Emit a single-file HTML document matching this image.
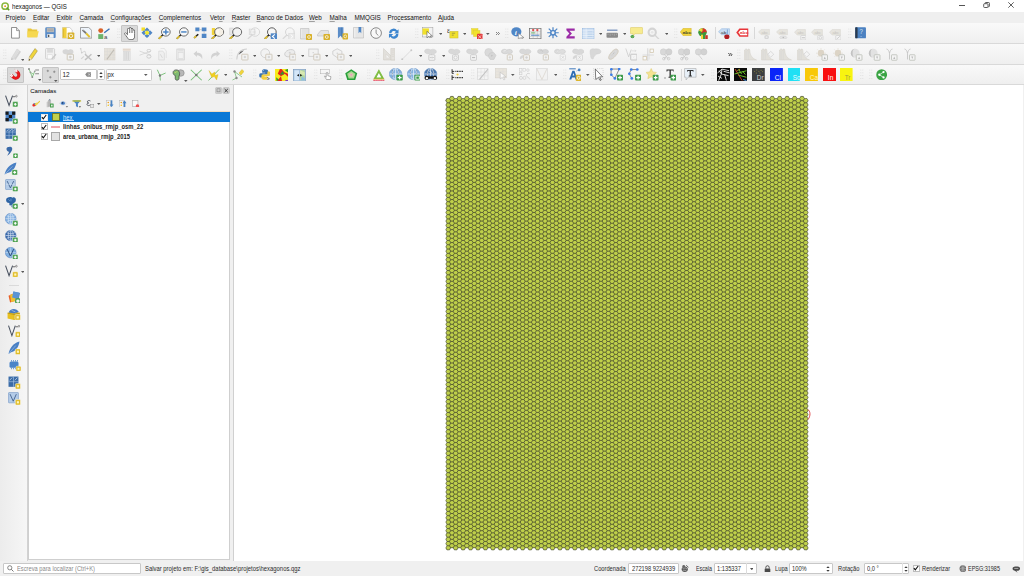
<!DOCTYPE html>
<html><head><meta charset="utf-8">
<style>
*{margin:0;padding:0;box-sizing:border-box}
html,body{width:1024px;height:576px;overflow:hidden;background:#f0f0f0;font-family:"Liberation Sans",sans-serif;color:#000}
.a{position:absolute}
u{text-decoration:underline;text-decoration-thickness:0.45px;text-underline-offset:0.9px;text-decoration-color:#a0a0a0}
#title{left:0;top:0;width:1024px;height:12px;background:#fff}
#menu{left:0;top:12px;width:1024px;height:10.5px;background:#efefef}
.tb{left:0;width:1024px;background:linear-gradient(#f9f9f9,#efefef);border-bottom:1px solid #d9d9d9}
.mi{position:absolute;top:13.6px;font-size:6.3px;line-height:8px;color:#111;white-space:nowrap}
.grip{width:2px;background-image:radial-gradient(circle,#c4c4c4 0.6px,transparent 0.7px);background-size:2px 2px}
.pressed{background:#dadada;border:0.6px solid #c4c4c4;border-radius:1px}
.inp{background:#fff;border:0.6px solid #c8c8c8;border-radius:1px}
#canvas{left:233px;top:85px;width:790px;height:475.5px;background:#fff;border-left:0.7px solid #d0d0d0}
.lt{position:absolute;font-size:7px;line-height:9px;white-space:nowrap;font-weight:bold;color:#1a1a1a;transform:scaleX(0.835);transform-origin:0 0}
.cb{position:absolute;width:7px;height:7px;background:#fff;border:0.6px solid #bdbdbd}
.st{position:absolute;top:565.2px;font-size:6.6px;line-height:7px;white-space:nowrap;color:#2a2a2a;transform:scaleX(0.87);transform-origin:0 0}
</style></head><body>
<div id="title" class="a">
  <svg class="a" style="left:1px;top:2px" width="9" height="9" viewBox="0 0 24 24"><circle cx="11" cy="11" r="8.5" fill="none" stroke="#8cb840" stroke-width="4"/><path d="M15 15L22 22" stroke="#5f9a2a" stroke-width="4"/><circle cx="11" cy="11" r="2.5" fill="#f09020"/></svg>
  <div class="a" style="left:12.2px;top:2.6px;font-size:7px;line-height:8px;color:#111;white-space:nowrap;transform:scaleX(0.875);transform-origin:0 0">hexagonos — QGIS</div>
  <div class="a" style="left:959px;top:5px;width:6px;height:0.9px;background:#555"></div>
  <svg class="a" style="left:982.5px;top:2.3px" width="7" height="6" viewBox="0 0 7 6"><rect x="0.7" y="1.7" width="4.3" height="3.8" rx="0.8" fill="none" stroke="#4a4a4a" stroke-width="0.9"/><path d="M2 1.4V1.2A0.8 0.8 0 0 1 2.8 0.5H5.6A0.8 0.8 0 0 1 6.4 1.3V4A0.8 0.8 0 0 1 5.6 4.8H5.3" fill="none" stroke="#4a4a4a" stroke-width="0.9"/></svg>
  <svg class="a" style="left:1007.8px;top:2.4px" width="6" height="6" viewBox="0 0 6 6"><path d="M0.3 0.3L5.7 5.7M5.7 0.3L0.3 5.7" stroke="#444" stroke-width="0.85"/></svg>
</div>
<div id="menu" class="a"></div>
<div class="mi" style="left:5.5px">Pro<u>j</u>eto</div>
<div class="mi" style="left:33px"><u>E</u>ditar</div>
<div class="mi" style="left:56.5px"><u>E</u>xibir</div>
<div class="mi" style="left:79.5px"><u>C</u>amada</div>
<div class="mi" style="left:110.5px"><u>C</u>onfigurações</div>
<div class="mi" style="left:158.8px"><u>C</u>omplementos</div>
<div class="mi" style="left:210px">Vet<u>o</u>r</div>
<div class="mi" style="left:231.8px"><u>R</u>aster</div>
<div class="mi" style="left:256.5px"><u>B</u>anco de Dados</div>
<div class="mi" style="left:309px"><u>W</u>eb</div>
<div class="mi" style="left:329.5px"><u>M</u>alha</div>
<div class="mi" style="left:354.5px">MMQGIS</div>
<div class="mi" style="left:387.5px">Pro<u>c</u>essamento</div>
<div class="mi" style="left:438px"><u>A</u>juda</div>

<div class="tb a" style="top:22.5px;height:21px"></div>
<div class="tb a" style="top:43.5px;height:21px"></div>
<div class="tb a" style="top:64.5px;height:20px"></div>
<!-- left toolbar -->
<div class="a" style="left:0;top:85px;width:27.5px;height:476px;background:linear-gradient(90deg,#ececec,#f6f6f6);border-right:0.7px solid #d2d2d2"></div>
<div class="a grip" style="left:10px;top:88px;width:10px;height:2px;background-image:radial-gradient(circle,#c8c8c8 0.6px,transparent 0.7px)"></div>
<!-- layers panel -->
<div class="a" style="left:28px;top:85px;width:205px;height:476px;background:#f0f0f0"></div>
<div class="a" style="left:30.2px;top:86.6px;font-size:6.1px;line-height:8px;color:#000">Camadas</div>
<svg class="a" style="left:214.5px;top:86.5px" width="15" height="7.5" viewBox="0 0 15 7.5"><rect x="0.3" y="0.3" width="6.6" height="6.6" rx="1.8" fill="#cfcfcf" stroke="#b8b8b8" stroke-width="0.5"/><rect x="2" y="1.8" width="3" height="3" fill="none" stroke="#888" stroke-width="0.6"/><rect x="7.9" y="0.3" width="6.6" height="6.6" rx="1.8" fill="#cfcfcf" stroke="#b8b8b8" stroke-width="0.5"/><path d="M9.6 2L12.8 5.2M12.8 2L9.6 5.2" stroke="#222" stroke-width="0.9"/></svg>
<div class="a" style="left:27.6px;top:111.3px;width:202.6px;height:449.2px;background:#fff;border:0.7px solid #cfcfcf;border-top:0.7px solid #f2dcc0"></div>
<div class="a" style="left:28px;top:112px;width:201.7px;height:10px;background:#0a78d6"></div>
<div class="cb" style="left:40.7px;top:113.8px;border-color:#e8e8e8"></div>
<div class="cb" style="left:40.7px;top:123.2px"></div>
<div class="cb" style="left:40.7px;top:132.8px"></div>
<svg class="a" style="left:41.2px;top:114.2px" width="6" height="6" viewBox="0 0 6 6"><path d="M0.9 3.1L2.3 4.9L5.2 1" stroke="#111" stroke-width="1.1" fill="none"/></svg>
<svg class="a" style="left:41.2px;top:123.6px" width="6" height="6" viewBox="0 0 6 6"><path d="M0.9 3.1L2.3 4.9L5.2 1" stroke="#111" stroke-width="1.1" fill="none"/></svg>
<svg class="a" style="left:41.2px;top:133.2px" width="6" height="6" viewBox="0 0 6 6"><path d="M0.9 3.1L2.3 4.9L5.2 1" stroke="#111" stroke-width="1.1" fill="none"/></svg>
<div class="a" style="left:51.5px;top:113.2px;width:8.3px;height:8.3px;background:#c0d04a;border:0.5px solid #6a7a30"></div>
<div class="a" style="left:51px;top:126.4px;width:9px;height:1.4px;background:#f2a4ac"></div>
<div class="a" style="left:51px;top:132.2px;width:9px;height:8.5px;background:#e2e2e2;border:0.8px solid #a8a8a8"></div>
<div class="lt" style="left:63px;top:112.6px;font-weight:normal;color:#d8ecff">hex</div>
<div class="a" style="left:63px;top:120.3px;width:10.5px;height:0.6px;background:#b8d8f8"></div>
<div class="lt" style="left:63px;top:122.2px">linhas_onibus_rmjp_osm_22</div>
<div class="lt" style="left:63px;top:131.8px">area_urbana_rmjp_2015</div>
<div id="canvas" class="a"></div>
<svg class="a" style="left:0;top:0" width="1024" height="576" viewBox="0 0 1024 576">
<defs>
<clipPath id="hc"><path d="M445.72 100.65 446.96 98.50 449.44 98.50 450.68 96.35 453.17 96.35 454.41 98.50 456.89 98.50 458.13 96.35 460.61 96.35 461.86 98.50 464.34 98.50 465.58 96.35 468.06 96.35 469.31 98.50 471.79 98.50 473.03 96.35 475.51 96.35 476.75 98.50 479.24 98.50 480.48 96.35 482.96 96.35 484.20 98.50 486.69 98.50 487.93 96.35 490.41 96.35 491.65 98.50 494.14 98.50 495.38 96.35 497.86 96.35 499.10 98.50 501.58 98.50 502.83 96.35 505.31 96.35 506.55 98.50 509.03 98.50 510.28 96.35 512.76 96.35 514.00 98.50 516.48 98.50 517.72 96.35 520.21 96.35 521.45 98.50 523.93 98.50 525.17 96.35 527.66 96.35 528.90 98.50 531.38 98.50 532.62 96.35 535.10 96.35 536.35 98.50 538.83 98.50 540.07 96.35 542.55 96.35 543.80 98.50 546.28 98.50 547.52 96.35 550.00 96.35 551.24 98.50 553.73 98.50 554.97 96.35 557.45 96.35 558.69 98.50 561.18 98.50 562.42 96.35 564.90 96.35 566.14 98.50 568.63 98.50 569.87 96.35 572.35 96.35 573.59 98.50 576.07 98.50 577.32 96.35 579.80 96.35 581.04 98.50 583.52 98.50 584.76 96.35 587.25 96.35 588.49 98.50 590.97 98.50 592.21 96.35 594.70 96.35 595.94 98.50 598.42 98.50 599.66 96.35 602.15 96.35 603.39 98.50 605.87 98.50 607.11 96.35 609.59 96.35 610.84 98.50 613.32 98.50 614.56 96.35 617.04 96.35 618.29 98.50 620.77 98.50 622.01 96.35 624.49 96.35 625.73 98.50 628.22 98.50 629.46 96.35 631.94 96.35 633.18 98.50 635.67 98.50 636.91 96.35 639.39 96.35 640.63 98.50 643.12 98.50 644.36 96.35 646.84 96.35 648.08 98.50 650.56 98.50 651.81 96.35 654.29 96.35 655.53 98.50 658.01 98.50 659.25 96.35 661.74 96.35 662.98 98.50 665.46 98.50 666.70 96.35 669.19 96.35 670.43 98.50 672.91 98.50 674.15 96.35 676.64 96.35 677.88 98.50 680.36 98.50 681.60 96.35 684.08 96.35 685.33 98.50 687.81 98.50 689.05 96.35 691.53 96.35 692.78 98.50 695.26 98.50 696.50 96.35 698.98 96.35 700.22 98.50 702.71 98.50 703.95 96.35 706.43 96.35 707.67 98.50 710.16 98.50 711.40 96.35 713.88 96.35 715.12 98.50 717.61 98.50 718.85 96.35 721.33 96.35 722.57 98.50 725.05 98.50 726.30 96.35 728.78 96.35 730.02 98.50 732.50 98.50 733.75 96.35 736.23 96.35 737.47 98.50 739.95 98.50 741.19 96.35 743.68 96.35 744.92 98.50 747.40 98.50 748.64 96.35 751.13 96.35 752.37 98.50 754.85 98.50 756.09 96.35 758.57 96.35 759.82 98.50 762.30 98.50 763.54 96.35 766.02 96.35 767.27 98.50 769.75 98.50 770.99 96.35 773.47 96.35 774.71 98.50 777.20 98.50 778.44 96.35 780.92 96.35 782.16 98.50 784.65 98.50 785.89 96.35 788.37 96.35 789.61 98.50 792.10 98.50 793.34 96.35 795.82 96.35 797.06 98.50 799.54 98.50 800.79 96.35 803.27 96.35 804.51 98.50 806.99 98.50 808.23 100.65 806.99 102.80 808.23 104.95 806.99 107.10 808.23 109.25 806.99 111.40 808.23 113.55 806.99 115.70 808.23 117.85 806.99 120.00 808.23 122.15 806.99 124.30 808.23 126.45 806.99 128.60 808.23 130.75 806.99 132.91 808.23 135.06 806.99 137.21 808.23 139.36 806.99 141.51 808.23 143.66 806.99 145.81 808.23 147.96 806.99 150.11 808.23 152.26 806.99 154.41 808.23 156.56 806.99 158.71 808.23 160.86 806.99 163.01 808.23 165.16 806.99 167.31 808.23 169.46 806.99 171.61 808.23 173.76 806.99 175.91 808.23 178.06 806.99 180.21 808.23 182.36 806.99 184.51 808.23 186.66 806.99 188.81 808.23 190.96 806.99 193.11 808.23 195.27 806.99 197.42 808.23 199.57 806.99 201.72 808.23 203.87 806.99 206.02 808.23 208.17 806.99 210.32 808.23 212.47 806.99 214.62 808.23 216.77 806.99 218.92 808.23 221.07 806.99 223.22 808.23 225.37 806.99 227.52 808.23 229.67 806.99 231.82 808.23 233.97 806.99 236.12 808.23 238.27 806.99 240.42 808.23 242.57 806.99 244.72 808.23 246.87 806.99 249.02 808.23 251.17 806.99 253.32 808.23 255.47 806.99 257.62 808.23 259.78 806.99 261.93 808.23 264.08 806.99 266.23 808.23 268.38 806.99 270.53 808.23 272.68 806.99 274.83 808.23 276.98 806.99 279.13 808.23 281.28 806.99 283.43 808.23 285.58 806.99 287.73 808.23 289.88 806.99 292.03 808.23 294.18 806.99 296.33 808.23 298.48 806.99 300.63 808.23 302.78 806.99 304.93 808.23 307.08 806.99 309.23 808.23 311.38 806.99 313.53 808.23 315.68 806.99 317.83 808.23 319.98 806.99 322.14 808.23 324.29 806.99 326.44 808.23 328.59 806.99 330.74 808.23 332.89 806.99 335.04 808.23 337.19 806.99 339.34 808.23 341.49 806.99 343.64 808.23 345.79 806.99 347.94 808.23 350.09 806.99 352.24 808.23 354.39 806.99 356.54 808.23 358.69 806.99 360.84 808.23 362.99 806.99 365.14 808.23 367.29 806.99 369.44 808.23 371.59 806.99 373.74 808.23 375.89 806.99 378.04 808.23 380.19 806.99 382.34 808.23 384.50 806.99 386.65 808.23 388.80 806.99 390.95 808.23 393.10 806.99 395.25 808.23 397.40 806.99 399.55 808.23 401.70 806.99 403.85 808.23 406.00 806.99 408.15 808.23 410.30 806.99 412.45 808.23 414.60 806.99 416.75 808.23 418.90 806.99 421.05 808.23 423.20 806.99 425.35 808.23 427.50 806.99 429.65 808.23 431.80 806.99 433.95 808.23 436.10 806.99 438.25 808.23 440.40 806.99 442.55 808.23 444.70 806.99 446.85 808.23 449.01 806.99 451.16 808.23 453.31 806.99 455.46 808.23 457.61 806.99 459.76 808.23 461.91 806.99 464.06 808.23 466.21 806.99 468.36 808.23 470.51 806.99 472.66 808.23 474.81 806.99 476.96 808.23 479.11 806.99 481.26 808.23 483.41 806.99 485.56 808.23 487.71 806.99 489.86 808.23 492.01 806.99 494.16 808.23 496.31 806.99 498.46 808.23 500.61 806.99 502.76 808.23 504.91 806.99 507.06 808.23 509.21 806.99 511.37 808.23 513.52 806.99 515.67 808.23 517.82 806.99 519.97 808.23 522.12 806.99 524.27 808.23 526.42 806.99 528.57 808.23 530.72 806.99 532.87 808.23 535.02 806.99 537.17 808.23 539.32 806.99 541.47 808.23 543.62 806.99 545.77 808.23 547.92 806.99 550.07 806.99 550.07 804.51 550.07 803.27 547.92 800.79 547.92 799.54 550.07 797.06 550.07 795.82 547.92 793.34 547.92 792.10 550.07 789.61 550.07 788.37 547.92 785.89 547.92 784.65 550.07 782.16 550.07 780.92 547.92 778.44 547.92 777.20 550.07 774.71 550.07 773.47 547.92 770.99 547.92 769.75 550.07 767.27 550.07 766.02 547.92 763.54 547.92 762.30 550.07 759.82 550.07 758.57 547.92 756.09 547.92 754.85 550.07 752.37 550.07 751.13 547.92 748.64 547.92 747.40 550.07 744.92 550.07 743.68 547.92 741.19 547.92 739.95 550.07 737.47 550.07 736.23 547.92 733.75 547.92 732.50 550.07 730.02 550.07 728.78 547.92 726.30 547.92 725.05 550.07 722.57 550.07 721.33 547.92 718.85 547.92 717.61 550.07 715.12 550.07 713.88 547.92 711.40 547.92 710.16 550.07 707.67 550.07 706.43 547.92 703.95 547.92 702.71 550.07 700.22 550.07 698.98 547.92 696.50 547.92 695.26 550.07 692.78 550.07 691.53 547.92 689.05 547.92 687.81 550.07 685.33 550.07 684.08 547.92 681.60 547.92 680.36 550.07 677.88 550.07 676.64 547.92 674.15 547.92 672.91 550.07 670.43 550.07 669.19 547.92 666.70 547.92 665.46 550.07 662.98 550.07 661.74 547.92 659.25 547.92 658.01 550.07 655.53 550.07 654.29 547.92 651.81 547.92 650.56 550.07 648.08 550.07 646.84 547.92 644.36 547.92 643.12 550.07 640.63 550.07 639.39 547.92 636.91 547.92 635.67 550.07 633.18 550.07 631.94 547.92 629.46 547.92 628.22 550.07 625.73 550.07 624.49 547.92 622.01 547.92 620.77 550.07 618.29 550.07 617.04 547.92 614.56 547.92 613.32 550.07 610.84 550.07 609.59 547.92 607.11 547.92 605.87 550.07 603.39 550.07 602.15 547.92 599.66 547.92 598.42 550.07 595.94 550.07 594.70 547.92 592.21 547.92 590.97 550.07 588.49 550.07 587.25 547.92 584.76 547.92 583.52 550.07 581.04 550.07 579.80 547.92 577.32 547.92 576.07 550.07 573.59 550.07 572.35 547.92 569.87 547.92 568.63 550.07 566.14 550.07 564.90 547.92 562.42 547.92 561.18 550.07 558.69 550.07 557.45 547.92 554.97 547.92 553.73 550.07 551.24 550.07 550.00 547.92 547.52 547.92 546.28 550.07 543.80 550.07 542.55 547.92 540.07 547.92 538.83 550.07 536.35 550.07 535.10 547.92 532.62 547.92 531.38 550.07 528.90 550.07 527.66 547.92 525.17 547.92 523.93 550.07 521.45 550.07 520.21 547.92 517.72 547.92 516.48 550.07 514.00 550.07 512.76 547.92 510.28 547.92 509.03 550.07 506.55 550.07 505.31 547.92 502.83 547.92 501.58 550.07 499.10 550.07 497.86 547.92 495.38 547.92 494.14 550.07 491.65 550.07 490.41 547.92 487.93 547.92 486.69 550.07 484.20 550.07 482.96 547.92 480.48 547.92 479.24 550.07 476.75 550.07 475.51 547.92 473.03 547.92 471.79 550.07 469.31 550.07 468.06 547.92 465.58 547.92 464.34 550.07 461.86 550.07 460.61 547.92 458.13 547.92 456.89 550.07 454.41 550.07 453.17 547.92 450.68 547.92 449.44 550.07 446.96 550.07 445.72 547.92 446.96 545.77 445.72 543.62 446.96 541.47 445.72 539.32 446.96 537.17 445.72 535.02 446.96 532.87 445.72 530.72 446.96 528.57 445.72 526.42 446.96 524.27 445.72 522.12 446.96 519.97 445.72 517.82 446.96 515.67 445.72 513.52 446.96 511.37 445.72 509.21 446.96 507.06 445.72 504.91 446.96 502.76 445.72 500.61 446.96 498.46 445.72 496.31 446.96 494.16 445.72 492.01 446.96 489.86 445.72 487.71 446.96 485.56 445.72 483.41 446.96 481.26 445.72 479.11 446.96 476.96 445.72 474.81 446.96 472.66 445.72 470.51 446.96 468.36 445.72 466.21 446.96 464.06 445.72 461.91 446.96 459.76 445.72 457.61 446.96 455.46 445.72 453.31 446.96 451.16 445.72 449.01 446.96 446.85 445.72 444.70 446.96 442.55 445.72 440.40 446.96 438.25 445.72 436.10 446.96 433.95 445.72 431.80 446.96 429.65 445.72 427.50 446.96 425.35 445.72 423.20 446.96 421.05 445.72 418.90 446.96 416.75 445.72 414.60 446.96 412.45 445.72 410.30 446.96 408.15 445.72 406.00 446.96 403.85 445.72 401.70 446.96 399.55 445.72 397.40 446.96 395.25 445.72 393.10 446.96 390.95 445.72 388.80 446.96 386.65 445.72 384.50 446.96 382.34 445.72 380.19 446.96 378.04 445.72 375.89 446.96 373.74 445.72 371.59 446.96 369.44 445.72 367.29 446.96 365.14 445.72 362.99 446.96 360.84 445.72 358.69 446.96 356.54 445.72 354.39 446.96 352.24 445.72 350.09 446.96 347.94 445.72 345.79 446.96 343.64 445.72 341.49 446.96 339.34 445.72 337.19 446.96 335.04 445.72 332.89 446.96 330.74 445.72 328.59 446.96 326.44 445.72 324.29 446.96 322.14 445.72 319.98 446.96 317.83 445.72 315.68 446.96 313.53 445.72 311.38 446.96 309.23 445.72 307.08 446.96 304.93 445.72 302.78 446.96 300.63 445.72 298.48 446.96 296.33 445.72 294.18 446.96 292.03 445.72 289.88 446.96 287.73 445.72 285.58 446.96 283.43 445.72 281.28 446.96 279.13 445.72 276.98 446.96 274.83 445.72 272.68 446.96 270.53 445.72 268.38 446.96 266.23 445.72 264.08 446.96 261.93 445.72 259.78 446.96 257.62 445.72 255.47 446.96 253.32 445.72 251.17 446.96 249.02 445.72 246.87 446.96 244.72 445.72 242.57 446.96 240.42 445.72 238.27 446.96 236.12 445.72 233.97 446.96 231.82 445.72 229.67 446.96 227.52 445.72 225.37 446.96 223.22 445.72 221.07 446.96 218.92 445.72 216.77 446.96 214.62 445.72 212.47 446.96 210.32 445.72 208.17 446.96 206.02 445.72 203.87 446.96 201.72 445.72 199.57 446.96 197.42 445.72 195.27 446.96 193.11 445.72 190.96 446.96 188.81 445.72 186.66 446.96 184.51 445.72 182.36 446.96 180.21 445.72 178.06 446.96 175.91 445.72 173.76 446.96 171.61 445.72 169.46 446.96 167.31 445.72 165.16 446.96 163.01 445.72 160.86 446.96 158.71 445.72 156.56 446.96 154.41 445.72 152.26 446.96 150.11 445.72 147.96 446.96 145.81 445.72 143.66 446.96 141.51 445.72 139.36 446.96 137.21 445.72 135.06 446.96 132.91 445.72 130.75 446.96 128.60 445.72 126.45 446.96 124.30 445.72 122.15 446.96 120.00 445.72 117.85 446.96 115.70 445.72 113.55 446.96 111.40 445.72 109.25 446.96 107.10 445.72 104.95 446.96 102.80 445.72 100.65 446.96 98.50Z"/></clipPath>
<path id="z" d="M0 0l1.242 2.150l-1.242 2.150l1.242 2.150l-1.242 2.150l1.242 2.150l-1.242 2.150l1.242 2.150l-1.242 2.150l1.242 2.150l-1.242 2.150l1.242 2.150l-1.242 2.150l1.242 2.150l-1.242 2.150l1.242 2.150l-1.242 2.150l1.242 2.150l-1.242 2.150l1.242 2.150l-1.242 2.150l1.242 2.150l-1.242 2.150l1.242 2.150l-1.242 2.150l1.242 2.150l-1.242 2.150l1.242 2.150l-1.242 2.150l1.242 2.150l-1.242 2.150l1.242 2.150l-1.242 2.150l1.242 2.150l-1.242 2.150l1.242 2.150l-1.242 2.150l1.242 2.150l-1.242 2.150l1.242 2.150l-1.242 2.150l1.242 2.150l-1.242 2.150l1.242 2.150l-1.242 2.150l1.242 2.150l-1.242 2.150l1.242 2.150l-1.242 2.150l1.242 2.150l-1.242 2.150l1.242 2.150l-1.242 2.150l1.242 2.150l-1.242 2.150l1.242 2.150l-1.242 2.150l1.242 2.150l-1.242 2.150l1.242 2.150l-1.242 2.150l1.242 2.150l-1.242 2.150l1.242 2.150l-1.242 2.150l1.242 2.150l-1.242 2.150l1.242 2.150l-1.242 2.150l1.242 2.150l-1.242 2.150l1.242 2.150l-1.242 2.150l1.242 2.150l-1.242 2.150l1.242 2.150l-1.242 2.150l1.242 2.150l-1.242 2.150l1.242 2.150l-1.242 2.150l1.242 2.150l-1.242 2.150l1.242 2.150l-1.242 2.150l1.242 2.150l-1.242 2.150l1.242 2.150l-1.242 2.150l1.242 2.150l-1.242 2.150l1.242 2.150l-1.242 2.150l1.242 2.150l-1.242 2.150l1.242 2.150l-1.242 2.150l1.242 2.150l-1.242 2.150l1.242 2.150l-1.242 2.150l1.242 2.150l-1.242 2.150l1.242 2.150l-1.242 2.150l1.242 2.150l-1.242 2.150l1.242 2.150l-1.242 2.150l1.242 2.150l-1.242 2.150l1.242 2.150l-1.242 2.150l1.242 2.150l-1.242 2.150l1.242 2.150l-1.242 2.150l1.242 2.150l-1.242 2.150l1.242 2.150l-1.242 2.150l1.242 2.150l-1.242 2.150l1.242 2.150l-1.242 2.150l1.242 2.150l-1.242 2.150l1.242 2.150l-1.242 2.150l1.242 2.150l-1.242 2.150l1.242 2.150l-1.242 2.150l1.242 2.150l-1.242 2.150l1.242 2.150l-1.242 2.150l1.242 2.150l-1.242 2.150l1.242 2.150l-1.242 2.150l1.242 2.150l-1.242 2.150l1.242 2.150l-1.242 2.150l1.242 2.150l-1.242 2.150l1.242 2.150l-1.242 2.150l1.242 2.150l-1.242 2.150l1.242 2.150l-1.242 2.150l1.242 2.150l-1.242 2.150l1.242 2.150l-1.242 2.150l1.242 2.150l-1.242 2.150l1.242 2.150l-1.242 2.150l1.242 2.150l-1.242 2.150l1.242 2.150l-1.242 2.150l1.242 2.150l-1.242 2.150l1.242 2.150l-1.242 2.150l1.242 2.150l-1.242 2.150l1.242 2.150l-1.242 2.150l1.242 2.150l-1.242 2.150l1.242 2.150l-1.242 2.150l1.242 2.150l-1.242 2.150l1.242 2.150l-1.242 2.150l1.242 2.150l-1.242 2.150l1.242 2.150l-1.242 2.150l1.242 2.150l-1.242 2.150l1.242 2.150l-1.242 2.150l1.242 2.150l-1.242 2.150l1.242 2.150l-1.242 2.150l1.242 2.150l-1.242 2.150l1.242 2.150l-1.242 2.150l1.242 2.150l-1.242 2.150l1.242 2.150l-1.242 2.150l1.242 2.150l-1.242 2.150l1.242 2.150l-1.242 2.150l1.242 2.150l-1.242 2.150l1.242 2.150l-1.242 2.150l1.242 2.150l-1.242 2.150l1.242 2.150l-1.242 2.150l1.242 2.150l-1.242 2.150l1.242 2.150l-1.242 2.150l1.242 2.150l-1.242 2.150l1.242 2.150l-1.242 2.150l1.242 2.150" fill="none"/><path id="he" d="M446.959 0H826.958" stroke-dasharray="2.483 4.966"/><path id="ho" d="M450.683 0H830.683" stroke-dasharray="2.483 4.966"/>
</defs>
<path d="M445.72 100.65 446.96 98.50 449.44 98.50 450.68 96.35 453.17 96.35 454.41 98.50 456.89 98.50 458.13 96.35 460.61 96.35 461.86 98.50 464.34 98.50 465.58 96.35 468.06 96.35 469.31 98.50 471.79 98.50 473.03 96.35 475.51 96.35 476.75 98.50 479.24 98.50 480.48 96.35 482.96 96.35 484.20 98.50 486.69 98.50 487.93 96.35 490.41 96.35 491.65 98.50 494.14 98.50 495.38 96.35 497.86 96.35 499.10 98.50 501.58 98.50 502.83 96.35 505.31 96.35 506.55 98.50 509.03 98.50 510.28 96.35 512.76 96.35 514.00 98.50 516.48 98.50 517.72 96.35 520.21 96.35 521.45 98.50 523.93 98.50 525.17 96.35 527.66 96.35 528.90 98.50 531.38 98.50 532.62 96.35 535.10 96.35 536.35 98.50 538.83 98.50 540.07 96.35 542.55 96.35 543.80 98.50 546.28 98.50 547.52 96.35 550.00 96.35 551.24 98.50 553.73 98.50 554.97 96.35 557.45 96.35 558.69 98.50 561.18 98.50 562.42 96.35 564.90 96.35 566.14 98.50 568.63 98.50 569.87 96.35 572.35 96.35 573.59 98.50 576.07 98.50 577.32 96.35 579.80 96.35 581.04 98.50 583.52 98.50 584.76 96.35 587.25 96.35 588.49 98.50 590.97 98.50 592.21 96.35 594.70 96.35 595.94 98.50 598.42 98.50 599.66 96.35 602.15 96.35 603.39 98.50 605.87 98.50 607.11 96.35 609.59 96.35 610.84 98.50 613.32 98.50 614.56 96.35 617.04 96.35 618.29 98.50 620.77 98.50 622.01 96.35 624.49 96.35 625.73 98.50 628.22 98.50 629.46 96.35 631.94 96.35 633.18 98.50 635.67 98.50 636.91 96.35 639.39 96.35 640.63 98.50 643.12 98.50 644.36 96.35 646.84 96.35 648.08 98.50 650.56 98.50 651.81 96.35 654.29 96.35 655.53 98.50 658.01 98.50 659.25 96.35 661.74 96.35 662.98 98.50 665.46 98.50 666.70 96.35 669.19 96.35 670.43 98.50 672.91 98.50 674.15 96.35 676.64 96.35 677.88 98.50 680.36 98.50 681.60 96.35 684.08 96.35 685.33 98.50 687.81 98.50 689.05 96.35 691.53 96.35 692.78 98.50 695.26 98.50 696.50 96.35 698.98 96.35 700.22 98.50 702.71 98.50 703.95 96.35 706.43 96.35 707.67 98.50 710.16 98.50 711.40 96.35 713.88 96.35 715.12 98.50 717.61 98.50 718.85 96.35 721.33 96.35 722.57 98.50 725.05 98.50 726.30 96.35 728.78 96.35 730.02 98.50 732.50 98.50 733.75 96.35 736.23 96.35 737.47 98.50 739.95 98.50 741.19 96.35 743.68 96.35 744.92 98.50 747.40 98.50 748.64 96.35 751.13 96.35 752.37 98.50 754.85 98.50 756.09 96.35 758.57 96.35 759.82 98.50 762.30 98.50 763.54 96.35 766.02 96.35 767.27 98.50 769.75 98.50 770.99 96.35 773.47 96.35 774.71 98.50 777.20 98.50 778.44 96.35 780.92 96.35 782.16 98.50 784.65 98.50 785.89 96.35 788.37 96.35 789.61 98.50 792.10 98.50 793.34 96.35 795.82 96.35 797.06 98.50 799.54 98.50 800.79 96.35 803.27 96.35 804.51 98.50 806.99 98.50 808.23 100.65 806.99 102.80 808.23 104.95 806.99 107.10 808.23 109.25 806.99 111.40 808.23 113.55 806.99 115.70 808.23 117.85 806.99 120.00 808.23 122.15 806.99 124.30 808.23 126.45 806.99 128.60 808.23 130.75 806.99 132.91 808.23 135.06 806.99 137.21 808.23 139.36 806.99 141.51 808.23 143.66 806.99 145.81 808.23 147.96 806.99 150.11 808.23 152.26 806.99 154.41 808.23 156.56 806.99 158.71 808.23 160.86 806.99 163.01 808.23 165.16 806.99 167.31 808.23 169.46 806.99 171.61 808.23 173.76 806.99 175.91 808.23 178.06 806.99 180.21 808.23 182.36 806.99 184.51 808.23 186.66 806.99 188.81 808.23 190.96 806.99 193.11 808.23 195.27 806.99 197.42 808.23 199.57 806.99 201.72 808.23 203.87 806.99 206.02 808.23 208.17 806.99 210.32 808.23 212.47 806.99 214.62 808.23 216.77 806.99 218.92 808.23 221.07 806.99 223.22 808.23 225.37 806.99 227.52 808.23 229.67 806.99 231.82 808.23 233.97 806.99 236.12 808.23 238.27 806.99 240.42 808.23 242.57 806.99 244.72 808.23 246.87 806.99 249.02 808.23 251.17 806.99 253.32 808.23 255.47 806.99 257.62 808.23 259.78 806.99 261.93 808.23 264.08 806.99 266.23 808.23 268.38 806.99 270.53 808.23 272.68 806.99 274.83 808.23 276.98 806.99 279.13 808.23 281.28 806.99 283.43 808.23 285.58 806.99 287.73 808.23 289.88 806.99 292.03 808.23 294.18 806.99 296.33 808.23 298.48 806.99 300.63 808.23 302.78 806.99 304.93 808.23 307.08 806.99 309.23 808.23 311.38 806.99 313.53 808.23 315.68 806.99 317.83 808.23 319.98 806.99 322.14 808.23 324.29 806.99 326.44 808.23 328.59 806.99 330.74 808.23 332.89 806.99 335.04 808.23 337.19 806.99 339.34 808.23 341.49 806.99 343.64 808.23 345.79 806.99 347.94 808.23 350.09 806.99 352.24 808.23 354.39 806.99 356.54 808.23 358.69 806.99 360.84 808.23 362.99 806.99 365.14 808.23 367.29 806.99 369.44 808.23 371.59 806.99 373.74 808.23 375.89 806.99 378.04 808.23 380.19 806.99 382.34 808.23 384.50 806.99 386.65 808.23 388.80 806.99 390.95 808.23 393.10 806.99 395.25 808.23 397.40 806.99 399.55 808.23 401.70 806.99 403.85 808.23 406.00 806.99 408.15 808.23 410.30 806.99 412.45 808.23 414.60 806.99 416.75 808.23 418.90 806.99 421.05 808.23 423.20 806.99 425.35 808.23 427.50 806.99 429.65 808.23 431.80 806.99 433.95 808.23 436.10 806.99 438.25 808.23 440.40 806.99 442.55 808.23 444.70 806.99 446.85 808.23 449.01 806.99 451.16 808.23 453.31 806.99 455.46 808.23 457.61 806.99 459.76 808.23 461.91 806.99 464.06 808.23 466.21 806.99 468.36 808.23 470.51 806.99 472.66 808.23 474.81 806.99 476.96 808.23 479.11 806.99 481.26 808.23 483.41 806.99 485.56 808.23 487.71 806.99 489.86 808.23 492.01 806.99 494.16 808.23 496.31 806.99 498.46 808.23 500.61 806.99 502.76 808.23 504.91 806.99 507.06 808.23 509.21 806.99 511.37 808.23 513.52 806.99 515.67 808.23 517.82 806.99 519.97 808.23 522.12 806.99 524.27 808.23 526.42 806.99 528.57 808.23 530.72 806.99 532.87 808.23 535.02 806.99 537.17 808.23 539.32 806.99 541.47 808.23 543.62 806.99 545.77 808.23 547.92 806.99 550.07 806.99 550.07 804.51 550.07 803.27 547.92 800.79 547.92 799.54 550.07 797.06 550.07 795.82 547.92 793.34 547.92 792.10 550.07 789.61 550.07 788.37 547.92 785.89 547.92 784.65 550.07 782.16 550.07 780.92 547.92 778.44 547.92 777.20 550.07 774.71 550.07 773.47 547.92 770.99 547.92 769.75 550.07 767.27 550.07 766.02 547.92 763.54 547.92 762.30 550.07 759.82 550.07 758.57 547.92 756.09 547.92 754.85 550.07 752.37 550.07 751.13 547.92 748.64 547.92 747.40 550.07 744.92 550.07 743.68 547.92 741.19 547.92 739.95 550.07 737.47 550.07 736.23 547.92 733.75 547.92 732.50 550.07 730.02 550.07 728.78 547.92 726.30 547.92 725.05 550.07 722.57 550.07 721.33 547.92 718.85 547.92 717.61 550.07 715.12 550.07 713.88 547.92 711.40 547.92 710.16 550.07 707.67 550.07 706.43 547.92 703.95 547.92 702.71 550.07 700.22 550.07 698.98 547.92 696.50 547.92 695.26 550.07 692.78 550.07 691.53 547.92 689.05 547.92 687.81 550.07 685.33 550.07 684.08 547.92 681.60 547.92 680.36 550.07 677.88 550.07 676.64 547.92 674.15 547.92 672.91 550.07 670.43 550.07 669.19 547.92 666.70 547.92 665.46 550.07 662.98 550.07 661.74 547.92 659.25 547.92 658.01 550.07 655.53 550.07 654.29 547.92 651.81 547.92 650.56 550.07 648.08 550.07 646.84 547.92 644.36 547.92 643.12 550.07 640.63 550.07 639.39 547.92 636.91 547.92 635.67 550.07 633.18 550.07 631.94 547.92 629.46 547.92 628.22 550.07 625.73 550.07 624.49 547.92 622.01 547.92 620.77 550.07 618.29 550.07 617.04 547.92 614.56 547.92 613.32 550.07 610.84 550.07 609.59 547.92 607.11 547.92 605.87 550.07 603.39 550.07 602.15 547.92 599.66 547.92 598.42 550.07 595.94 550.07 594.70 547.92 592.21 547.92 590.97 550.07 588.49 550.07 587.25 547.92 584.76 547.92 583.52 550.07 581.04 550.07 579.80 547.92 577.32 547.92 576.07 550.07 573.59 550.07 572.35 547.92 569.87 547.92 568.63 550.07 566.14 550.07 564.90 547.92 562.42 547.92 561.18 550.07 558.69 550.07 557.45 547.92 554.97 547.92 553.73 550.07 551.24 550.07 550.00 547.92 547.52 547.92 546.28 550.07 543.80 550.07 542.55 547.92 540.07 547.92 538.83 550.07 536.35 550.07 535.10 547.92 532.62 547.92 531.38 550.07 528.90 550.07 527.66 547.92 525.17 547.92 523.93 550.07 521.45 550.07 520.21 547.92 517.72 547.92 516.48 550.07 514.00 550.07 512.76 547.92 510.28 547.92 509.03 550.07 506.55 550.07 505.31 547.92 502.83 547.92 501.58 550.07 499.10 550.07 497.86 547.92 495.38 547.92 494.14 550.07 491.65 550.07 490.41 547.92 487.93 547.92 486.69 550.07 484.20 550.07 482.96 547.92 480.48 547.92 479.24 550.07 476.75 550.07 475.51 547.92 473.03 547.92 471.79 550.07 469.31 550.07 468.06 547.92 465.58 547.92 464.34 550.07 461.86 550.07 460.61 547.92 458.13 547.92 456.89 550.07 454.41 550.07 453.17 547.92 450.68 547.92 449.44 550.07 446.96 550.07 445.72 547.92 446.96 545.77 445.72 543.62 446.96 541.47 445.72 539.32 446.96 537.17 445.72 535.02 446.96 532.87 445.72 530.72 446.96 528.57 445.72 526.42 446.96 524.27 445.72 522.12 446.96 519.97 445.72 517.82 446.96 515.67 445.72 513.52 446.96 511.37 445.72 509.21 446.96 507.06 445.72 504.91 446.96 502.76 445.72 500.61 446.96 498.46 445.72 496.31 446.96 494.16 445.72 492.01 446.96 489.86 445.72 487.71 446.96 485.56 445.72 483.41 446.96 481.26 445.72 479.11 446.96 476.96 445.72 474.81 446.96 472.66 445.72 470.51 446.96 468.36 445.72 466.21 446.96 464.06 445.72 461.91 446.96 459.76 445.72 457.61 446.96 455.46 445.72 453.31 446.96 451.16 445.72 449.01 446.96 446.85 445.72 444.70 446.96 442.55 445.72 440.40 446.96 438.25 445.72 436.10 446.96 433.95 445.72 431.80 446.96 429.65 445.72 427.50 446.96 425.35 445.72 423.20 446.96 421.05 445.72 418.90 446.96 416.75 445.72 414.60 446.96 412.45 445.72 410.30 446.96 408.15 445.72 406.00 446.96 403.85 445.72 401.70 446.96 399.55 445.72 397.40 446.96 395.25 445.72 393.10 446.96 390.95 445.72 388.80 446.96 386.65 445.72 384.50 446.96 382.34 445.72 380.19 446.96 378.04 445.72 375.89 446.96 373.74 445.72 371.59 446.96 369.44 445.72 367.29 446.96 365.14 445.72 362.99 446.96 360.84 445.72 358.69 446.96 356.54 445.72 354.39 446.96 352.24 445.72 350.09 446.96 347.94 445.72 345.79 446.96 343.64 445.72 341.49 446.96 339.34 445.72 337.19 446.96 335.04 445.72 332.89 446.96 330.74 445.72 328.59 446.96 326.44 445.72 324.29 446.96 322.14 445.72 319.98 446.96 317.83 445.72 315.68 446.96 313.53 445.72 311.38 446.96 309.23 445.72 307.08 446.96 304.93 445.72 302.78 446.96 300.63 445.72 298.48 446.96 296.33 445.72 294.18 446.96 292.03 445.72 289.88 446.96 287.73 445.72 285.58 446.96 283.43 445.72 281.28 446.96 279.13 445.72 276.98 446.96 274.83 445.72 272.68 446.96 270.53 445.72 268.38 446.96 266.23 445.72 264.08 446.96 261.93 445.72 259.78 446.96 257.62 445.72 255.47 446.96 253.32 445.72 251.17 446.96 249.02 445.72 246.87 446.96 244.72 445.72 242.57 446.96 240.42 445.72 238.27 446.96 236.12 445.72 233.97 446.96 231.82 445.72 229.67 446.96 227.52 445.72 225.37 446.96 223.22 445.72 221.07 446.96 218.92 445.72 216.77 446.96 214.62 445.72 212.47 446.96 210.32 445.72 208.17 446.96 206.02 445.72 203.87 446.96 201.72 445.72 199.57 446.96 197.42 445.72 195.27 446.96 193.11 445.72 190.96 446.96 188.81 445.72 186.66 446.96 184.51 445.72 182.36 446.96 180.21 445.72 178.06 446.96 175.91 445.72 173.76 446.96 171.61 445.72 169.46 446.96 167.31 445.72 165.16 446.96 163.01 445.72 160.86 446.96 158.71 445.72 156.56 446.96 154.41 445.72 152.26 446.96 150.11 445.72 147.96 446.96 145.81 445.72 143.66 446.96 141.51 445.72 139.36 446.96 137.21 445.72 135.06 446.96 132.91 445.72 130.75 446.96 128.60 445.72 126.45 446.96 124.30 445.72 122.15 446.96 120.00 445.72 117.85 446.96 115.70 445.72 113.55 446.96 111.40 445.72 109.25 446.96 107.10 445.72 104.95 446.96 102.80 445.72 100.65 446.96 98.50Z" fill="#bfd04a"/>
<g clip-path="url(#hc)" stroke="#4e5230" stroke-width="0.85" fill="none"><use href="#z" x="445.717" y="87.748"/><use href="#z" x="449.441" y="85.598"/><use href="#z" x="453.166" y="87.748"/><use href="#z" x="456.890" y="85.598"/><use href="#z" x="460.615" y="87.748"/><use href="#z" x="464.339" y="85.598"/><use href="#z" x="468.064" y="87.748"/><use href="#z" x="471.788" y="85.598"/><use href="#z" x="475.513" y="87.748"/><use href="#z" x="479.238" y="85.598"/><use href="#z" x="482.962" y="87.748"/><use href="#z" x="486.686" y="85.598"/><use href="#z" x="490.411" y="87.748"/><use href="#z" x="494.135" y="85.598"/><use href="#z" x="497.860" y="87.748"/><use href="#z" x="501.584" y="85.598"/><use href="#z" x="505.309" y="87.748"/><use href="#z" x="509.034" y="85.598"/><use href="#z" x="512.758" y="87.748"/><use href="#z" x="516.483" y="85.598"/><use href="#z" x="520.207" y="87.748"/><use href="#z" x="523.932" y="85.598"/><use href="#z" x="527.656" y="87.748"/><use href="#z" x="531.380" y="85.598"/><use href="#z" x="535.105" y="87.748"/><use href="#z" x="538.830" y="85.598"/><use href="#z" x="542.554" y="87.748"/><use href="#z" x="546.279" y="85.598"/><use href="#z" x="550.003" y="87.748"/><use href="#z" x="553.728" y="85.598"/><use href="#z" x="557.452" y="87.748"/><use href="#z" x="561.177" y="85.598"/><use href="#z" x="564.901" y="87.748"/><use href="#z" x="568.626" y="85.598"/><use href="#z" x="572.350" y="87.748"/><use href="#z" x="576.075" y="85.598"/><use href="#z" x="579.799" y="87.748"/><use href="#z" x="583.524" y="85.598"/><use href="#z" x="587.248" y="87.748"/><use href="#z" x="590.973" y="85.598"/><use href="#z" x="594.697" y="87.748"/><use href="#z" x="598.422" y="85.598"/><use href="#z" x="602.146" y="87.748"/><use href="#z" x="605.870" y="85.598"/><use href="#z" x="609.595" y="87.748"/><use href="#z" x="613.320" y="85.598"/><use href="#z" x="617.044" y="87.748"/><use href="#z" x="620.769" y="85.598"/><use href="#z" x="624.493" y="87.748"/><use href="#z" x="628.217" y="85.598"/><use href="#z" x="631.942" y="87.748"/><use href="#z" x="635.667" y="85.598"/><use href="#z" x="639.391" y="87.748"/><use href="#z" x="643.115" y="85.598"/><use href="#z" x="646.840" y="87.748"/><use href="#z" x="650.565" y="85.598"/><use href="#z" x="654.289" y="87.748"/><use href="#z" x="658.014" y="85.598"/><use href="#z" x="661.738" y="87.748"/><use href="#z" x="665.463" y="85.598"/><use href="#z" x="669.187" y="87.748"/><use href="#z" x="672.912" y="85.598"/><use href="#z" x="676.636" y="87.748"/><use href="#z" x="680.361" y="85.598"/><use href="#z" x="684.085" y="87.748"/><use href="#z" x="687.810" y="85.598"/><use href="#z" x="691.534" y="87.748"/><use href="#z" x="695.259" y="85.598"/><use href="#z" x="698.983" y="87.748"/><use href="#z" x="702.707" y="85.598"/><use href="#z" x="706.432" y="87.748"/><use href="#z" x="710.157" y="85.598"/><use href="#z" x="713.881" y="87.748"/><use href="#z" x="717.606" y="85.598"/><use href="#z" x="721.330" y="87.748"/><use href="#z" x="725.054" y="85.598"/><use href="#z" x="728.779" y="87.748"/><use href="#z" x="732.504" y="85.598"/><use href="#z" x="736.228" y="87.748"/><use href="#z" x="739.953" y="85.598"/><use href="#z" x="743.677" y="87.748"/><use href="#z" x="747.402" y="85.598"/><use href="#z" x="751.126" y="87.748"/><use href="#z" x="754.851" y="85.598"/><use href="#z" x="758.575" y="87.748"/><use href="#z" x="762.300" y="85.598"/><use href="#z" x="766.024" y="87.748"/><use href="#z" x="769.749" y="85.598"/><use href="#z" x="773.473" y="87.748"/><use href="#z" x="777.197" y="85.598"/><use href="#z" x="780.922" y="87.748"/><use href="#z" x="784.647" y="85.598"/><use href="#z" x="788.371" y="87.748"/><use href="#z" x="792.096" y="85.598"/><use href="#z" x="795.820" y="87.748"/><use href="#z" x="799.544" y="85.598"/><use href="#z" x="803.269" y="87.748"/><use href="#z" x="806.994" y="85.598"/><use href="#he" y="94.199"/><use href="#ho" y="92.049"/><use href="#he" y="98.500"/><use href="#ho" y="96.349"/><use href="#he" y="102.800"/><use href="#ho" y="100.650"/><use href="#he" y="107.101"/><use href="#ho" y="104.951"/><use href="#he" y="111.402"/><use href="#ho" y="109.251"/><use href="#he" y="115.702"/><use href="#ho" y="113.552"/><use href="#he" y="120.003"/><use href="#ho" y="117.853"/><use href="#he" y="124.304"/><use href="#ho" y="122.153"/><use href="#he" y="128.604"/><use href="#ho" y="126.454"/><use href="#he" y="132.905"/><use href="#ho" y="130.755"/><use href="#he" y="137.206"/><use href="#ho" y="135.055"/><use href="#he" y="141.506"/><use href="#ho" y="139.356"/><use href="#he" y="145.807"/><use href="#ho" y="143.657"/><use href="#he" y="150.108"/><use href="#ho" y="147.958"/><use href="#he" y="154.409"/><use href="#ho" y="152.258"/><use href="#he" y="158.709"/><use href="#ho" y="156.559"/><use href="#he" y="163.010"/><use href="#ho" y="160.860"/><use href="#he" y="167.311"/><use href="#ho" y="165.160"/><use href="#he" y="171.611"/><use href="#ho" y="169.461"/><use href="#he" y="175.912"/><use href="#ho" y="173.762"/><use href="#he" y="180.213"/><use href="#ho" y="178.062"/><use href="#he" y="184.513"/><use href="#ho" y="182.363"/><use href="#he" y="188.814"/><use href="#ho" y="186.664"/><use href="#he" y="193.115"/><use href="#ho" y="190.964"/><use href="#he" y="197.415"/><use href="#ho" y="195.265"/><use href="#he" y="201.716"/><use href="#ho" y="199.566"/><use href="#he" y="206.017"/><use href="#ho" y="203.866"/><use href="#he" y="210.317"/><use href="#ho" y="208.167"/><use href="#he" y="214.618"/><use href="#ho" y="212.468"/><use href="#he" y="218.919"/><use href="#ho" y="216.768"/><use href="#he" y="223.219"/><use href="#ho" y="221.069"/><use href="#he" y="227.520"/><use href="#ho" y="225.370"/><use href="#he" y="231.821"/><use href="#ho" y="229.670"/><use href="#he" y="236.121"/><use href="#ho" y="233.971"/><use href="#he" y="240.422"/><use href="#ho" y="238.272"/><use href="#he" y="244.723"/><use href="#ho" y="242.573"/><use href="#he" y="249.024"/><use href="#ho" y="246.873"/><use href="#he" y="253.324"/><use href="#ho" y="251.174"/><use href="#he" y="257.625"/><use href="#ho" y="255.475"/><use href="#he" y="261.926"/><use href="#ho" y="259.775"/><use href="#he" y="266.226"/><use href="#ho" y="264.076"/><use href="#he" y="270.527"/><use href="#ho" y="268.377"/><use href="#he" y="274.828"/><use href="#ho" y="272.677"/><use href="#he" y="279.128"/><use href="#ho" y="276.978"/><use href="#he" y="283.429"/><use href="#ho" y="281.279"/><use href="#he" y="287.730"/><use href="#ho" y="285.579"/><use href="#he" y="292.030"/><use href="#ho" y="289.880"/><use href="#he" y="296.331"/><use href="#ho" y="294.181"/><use href="#he" y="300.632"/><use href="#ho" y="298.481"/><use href="#he" y="304.932"/><use href="#ho" y="302.782"/><use href="#he" y="309.233"/><use href="#ho" y="307.083"/><use href="#he" y="313.534"/><use href="#ho" y="311.383"/><use href="#he" y="317.834"/><use href="#ho" y="315.684"/><use href="#he" y="322.135"/><use href="#ho" y="319.985"/><use href="#he" y="326.436"/><use href="#ho" y="324.285"/><use href="#he" y="330.736"/><use href="#ho" y="328.586"/><use href="#he" y="335.037"/><use href="#ho" y="332.887"/><use href="#he" y="339.338"/><use href="#ho" y="337.188"/><use href="#he" y="343.639"/><use href="#ho" y="341.488"/><use href="#he" y="347.939"/><use href="#ho" y="345.789"/><use href="#he" y="352.240"/><use href="#ho" y="350.090"/><use href="#he" y="356.541"/><use href="#ho" y="354.390"/><use href="#he" y="360.841"/><use href="#ho" y="358.691"/><use href="#he" y="365.142"/><use href="#ho" y="362.992"/><use href="#he" y="369.443"/><use href="#ho" y="367.292"/><use href="#he" y="373.743"/><use href="#ho" y="371.593"/><use href="#he" y="378.044"/><use href="#ho" y="375.894"/><use href="#he" y="382.345"/><use href="#ho" y="380.194"/><use href="#he" y="386.645"/><use href="#ho" y="384.495"/><use href="#he" y="390.946"/><use href="#ho" y="388.796"/><use href="#he" y="395.247"/><use href="#ho" y="393.096"/><use href="#he" y="399.547"/><use href="#ho" y="397.397"/><use href="#he" y="403.848"/><use href="#ho" y="401.698"/><use href="#he" y="408.149"/><use href="#ho" y="405.998"/><use href="#he" y="412.449"/><use href="#ho" y="410.299"/><use href="#he" y="416.750"/><use href="#ho" y="414.600"/><use href="#he" y="421.051"/><use href="#ho" y="418.900"/><use href="#he" y="425.352"/><use href="#ho" y="423.201"/><use href="#he" y="429.652"/><use href="#ho" y="427.502"/><use href="#he" y="433.953"/><use href="#ho" y="431.803"/><use href="#he" y="438.254"/><use href="#ho" y="436.103"/><use href="#he" y="442.554"/><use href="#ho" y="440.404"/><use href="#he" y="446.855"/><use href="#ho" y="444.705"/><use href="#he" y="451.156"/><use href="#ho" y="449.005"/><use href="#he" y="455.456"/><use href="#ho" y="453.306"/><use href="#he" y="459.757"/><use href="#ho" y="457.607"/><use href="#he" y="464.058"/><use href="#ho" y="461.907"/><use href="#he" y="468.358"/><use href="#ho" y="466.208"/><use href="#he" y="472.659"/><use href="#ho" y="470.509"/><use href="#he" y="476.960"/><use href="#ho" y="474.809"/><use href="#he" y="481.260"/><use href="#ho" y="479.110"/><use href="#he" y="485.561"/><use href="#ho" y="483.411"/><use href="#he" y="489.862"/><use href="#ho" y="487.711"/><use href="#he" y="494.162"/><use href="#ho" y="492.012"/><use href="#he" y="498.463"/><use href="#ho" y="496.313"/><use href="#he" y="502.764"/><use href="#ho" y="500.613"/><use href="#he" y="507.064"/><use href="#ho" y="504.914"/><use href="#he" y="511.365"/><use href="#ho" y="509.215"/><use href="#he" y="515.666"/><use href="#ho" y="513.515"/><use href="#he" y="519.967"/><use href="#ho" y="517.816"/><use href="#he" y="524.267"/><use href="#ho" y="522.117"/><use href="#he" y="528.568"/><use href="#ho" y="526.418"/><use href="#he" y="532.869"/><use href="#ho" y="530.718"/><use href="#he" y="537.169"/><use href="#ho" y="535.019"/><use href="#he" y="541.470"/><use href="#ho" y="539.320"/><use href="#he" y="545.771"/><use href="#ho" y="543.620"/><use href="#he" y="550.071"/><use href="#ho" y="547.921"/><use href="#he" y="554.372"/><use href="#ho" y="552.222"/><use href="#he" y="558.673"/><use href="#ho" y="556.522"/></g>
<path d="M445.72 100.65 446.96 98.50 449.44 98.50 450.68 96.35 453.17 96.35 454.41 98.50 456.89 98.50 458.13 96.35 460.61 96.35 461.86 98.50 464.34 98.50 465.58 96.35 468.06 96.35 469.31 98.50 471.79 98.50 473.03 96.35 475.51 96.35 476.75 98.50 479.24 98.50 480.48 96.35 482.96 96.35 484.20 98.50 486.69 98.50 487.93 96.35 490.41 96.35 491.65 98.50 494.14 98.50 495.38 96.35 497.86 96.35 499.10 98.50 501.58 98.50 502.83 96.35 505.31 96.35 506.55 98.50 509.03 98.50 510.28 96.35 512.76 96.35 514.00 98.50 516.48 98.50 517.72 96.35 520.21 96.35 521.45 98.50 523.93 98.50 525.17 96.35 527.66 96.35 528.90 98.50 531.38 98.50 532.62 96.35 535.10 96.35 536.35 98.50 538.83 98.50 540.07 96.35 542.55 96.35 543.80 98.50 546.28 98.50 547.52 96.35 550.00 96.35 551.24 98.50 553.73 98.50 554.97 96.35 557.45 96.35 558.69 98.50 561.18 98.50 562.42 96.35 564.90 96.35 566.14 98.50 568.63 98.50 569.87 96.35 572.35 96.35 573.59 98.50 576.07 98.50 577.32 96.35 579.80 96.35 581.04 98.50 583.52 98.50 584.76 96.35 587.25 96.35 588.49 98.50 590.97 98.50 592.21 96.35 594.70 96.35 595.94 98.50 598.42 98.50 599.66 96.35 602.15 96.35 603.39 98.50 605.87 98.50 607.11 96.35 609.59 96.35 610.84 98.50 613.32 98.50 614.56 96.35 617.04 96.35 618.29 98.50 620.77 98.50 622.01 96.35 624.49 96.35 625.73 98.50 628.22 98.50 629.46 96.35 631.94 96.35 633.18 98.50 635.67 98.50 636.91 96.35 639.39 96.35 640.63 98.50 643.12 98.50 644.36 96.35 646.84 96.35 648.08 98.50 650.56 98.50 651.81 96.35 654.29 96.35 655.53 98.50 658.01 98.50 659.25 96.35 661.74 96.35 662.98 98.50 665.46 98.50 666.70 96.35 669.19 96.35 670.43 98.50 672.91 98.50 674.15 96.35 676.64 96.35 677.88 98.50 680.36 98.50 681.60 96.35 684.08 96.35 685.33 98.50 687.81 98.50 689.05 96.35 691.53 96.35 692.78 98.50 695.26 98.50 696.50 96.35 698.98 96.35 700.22 98.50 702.71 98.50 703.95 96.35 706.43 96.35 707.67 98.50 710.16 98.50 711.40 96.35 713.88 96.35 715.12 98.50 717.61 98.50 718.85 96.35 721.33 96.35 722.57 98.50 725.05 98.50 726.30 96.35 728.78 96.35 730.02 98.50 732.50 98.50 733.75 96.35 736.23 96.35 737.47 98.50 739.95 98.50 741.19 96.35 743.68 96.35 744.92 98.50 747.40 98.50 748.64 96.35 751.13 96.35 752.37 98.50 754.85 98.50 756.09 96.35 758.57 96.35 759.82 98.50 762.30 98.50 763.54 96.35 766.02 96.35 767.27 98.50 769.75 98.50 770.99 96.35 773.47 96.35 774.71 98.50 777.20 98.50 778.44 96.35 780.92 96.35 782.16 98.50 784.65 98.50 785.89 96.35 788.37 96.35 789.61 98.50 792.10 98.50 793.34 96.35 795.82 96.35 797.06 98.50 799.54 98.50 800.79 96.35 803.27 96.35 804.51 98.50 806.99 98.50 808.23 100.65 806.99 102.80 808.23 104.95 806.99 107.10 808.23 109.25 806.99 111.40 808.23 113.55 806.99 115.70 808.23 117.85 806.99 120.00 808.23 122.15 806.99 124.30 808.23 126.45 806.99 128.60 808.23 130.75 806.99 132.91 808.23 135.06 806.99 137.21 808.23 139.36 806.99 141.51 808.23 143.66 806.99 145.81 808.23 147.96 806.99 150.11 808.23 152.26 806.99 154.41 808.23 156.56 806.99 158.71 808.23 160.86 806.99 163.01 808.23 165.16 806.99 167.31 808.23 169.46 806.99 171.61 808.23 173.76 806.99 175.91 808.23 178.06 806.99 180.21 808.23 182.36 806.99 184.51 808.23 186.66 806.99 188.81 808.23 190.96 806.99 193.11 808.23 195.27 806.99 197.42 808.23 199.57 806.99 201.72 808.23 203.87 806.99 206.02 808.23 208.17 806.99 210.32 808.23 212.47 806.99 214.62 808.23 216.77 806.99 218.92 808.23 221.07 806.99 223.22 808.23 225.37 806.99 227.52 808.23 229.67 806.99 231.82 808.23 233.97 806.99 236.12 808.23 238.27 806.99 240.42 808.23 242.57 806.99 244.72 808.23 246.87 806.99 249.02 808.23 251.17 806.99 253.32 808.23 255.47 806.99 257.62 808.23 259.78 806.99 261.93 808.23 264.08 806.99 266.23 808.23 268.38 806.99 270.53 808.23 272.68 806.99 274.83 808.23 276.98 806.99 279.13 808.23 281.28 806.99 283.43 808.23 285.58 806.99 287.73 808.23 289.88 806.99 292.03 808.23 294.18 806.99 296.33 808.23 298.48 806.99 300.63 808.23 302.78 806.99 304.93 808.23 307.08 806.99 309.23 808.23 311.38 806.99 313.53 808.23 315.68 806.99 317.83 808.23 319.98 806.99 322.14 808.23 324.29 806.99 326.44 808.23 328.59 806.99 330.74 808.23 332.89 806.99 335.04 808.23 337.19 806.99 339.34 808.23 341.49 806.99 343.64 808.23 345.79 806.99 347.94 808.23 350.09 806.99 352.24 808.23 354.39 806.99 356.54 808.23 358.69 806.99 360.84 808.23 362.99 806.99 365.14 808.23 367.29 806.99 369.44 808.23 371.59 806.99 373.74 808.23 375.89 806.99 378.04 808.23 380.19 806.99 382.34 808.23 384.50 806.99 386.65 808.23 388.80 806.99 390.95 808.23 393.10 806.99 395.25 808.23 397.40 806.99 399.55 808.23 401.70 806.99 403.85 808.23 406.00 806.99 408.15 808.23 410.30 806.99 412.45 808.23 414.60 806.99 416.75 808.23 418.90 806.99 421.05 808.23 423.20 806.99 425.35 808.23 427.50 806.99 429.65 808.23 431.80 806.99 433.95 808.23 436.10 806.99 438.25 808.23 440.40 806.99 442.55 808.23 444.70 806.99 446.85 808.23 449.01 806.99 451.16 808.23 453.31 806.99 455.46 808.23 457.61 806.99 459.76 808.23 461.91 806.99 464.06 808.23 466.21 806.99 468.36 808.23 470.51 806.99 472.66 808.23 474.81 806.99 476.96 808.23 479.11 806.99 481.26 808.23 483.41 806.99 485.56 808.23 487.71 806.99 489.86 808.23 492.01 806.99 494.16 808.23 496.31 806.99 498.46 808.23 500.61 806.99 502.76 808.23 504.91 806.99 507.06 808.23 509.21 806.99 511.37 808.23 513.52 806.99 515.67 808.23 517.82 806.99 519.97 808.23 522.12 806.99 524.27 808.23 526.42 806.99 528.57 808.23 530.72 806.99 532.87 808.23 535.02 806.99 537.17 808.23 539.32 806.99 541.47 808.23 543.62 806.99 545.77 808.23 547.92 806.99 550.07 806.99 550.07 804.51 550.07 803.27 547.92 800.79 547.92 799.54 550.07 797.06 550.07 795.82 547.92 793.34 547.92 792.10 550.07 789.61 550.07 788.37 547.92 785.89 547.92 784.65 550.07 782.16 550.07 780.92 547.92 778.44 547.92 777.20 550.07 774.71 550.07 773.47 547.92 770.99 547.92 769.75 550.07 767.27 550.07 766.02 547.92 763.54 547.92 762.30 550.07 759.82 550.07 758.57 547.92 756.09 547.92 754.85 550.07 752.37 550.07 751.13 547.92 748.64 547.92 747.40 550.07 744.92 550.07 743.68 547.92 741.19 547.92 739.95 550.07 737.47 550.07 736.23 547.92 733.75 547.92 732.50 550.07 730.02 550.07 728.78 547.92 726.30 547.92 725.05 550.07 722.57 550.07 721.33 547.92 718.85 547.92 717.61 550.07 715.12 550.07 713.88 547.92 711.40 547.92 710.16 550.07 707.67 550.07 706.43 547.92 703.95 547.92 702.71 550.07 700.22 550.07 698.98 547.92 696.50 547.92 695.26 550.07 692.78 550.07 691.53 547.92 689.05 547.92 687.81 550.07 685.33 550.07 684.08 547.92 681.60 547.92 680.36 550.07 677.88 550.07 676.64 547.92 674.15 547.92 672.91 550.07 670.43 550.07 669.19 547.92 666.70 547.92 665.46 550.07 662.98 550.07 661.74 547.92 659.25 547.92 658.01 550.07 655.53 550.07 654.29 547.92 651.81 547.92 650.56 550.07 648.08 550.07 646.84 547.92 644.36 547.92 643.12 550.07 640.63 550.07 639.39 547.92 636.91 547.92 635.67 550.07 633.18 550.07 631.94 547.92 629.46 547.92 628.22 550.07 625.73 550.07 624.49 547.92 622.01 547.92 620.77 550.07 618.29 550.07 617.04 547.92 614.56 547.92 613.32 550.07 610.84 550.07 609.59 547.92 607.11 547.92 605.87 550.07 603.39 550.07 602.15 547.92 599.66 547.92 598.42 550.07 595.94 550.07 594.70 547.92 592.21 547.92 590.97 550.07 588.49 550.07 587.25 547.92 584.76 547.92 583.52 550.07 581.04 550.07 579.80 547.92 577.32 547.92 576.07 550.07 573.59 550.07 572.35 547.92 569.87 547.92 568.63 550.07 566.14 550.07 564.90 547.92 562.42 547.92 561.18 550.07 558.69 550.07 557.45 547.92 554.97 547.92 553.73 550.07 551.24 550.07 550.00 547.92 547.52 547.92 546.28 550.07 543.80 550.07 542.55 547.92 540.07 547.92 538.83 550.07 536.35 550.07 535.10 547.92 532.62 547.92 531.38 550.07 528.90 550.07 527.66 547.92 525.17 547.92 523.93 550.07 521.45 550.07 520.21 547.92 517.72 547.92 516.48 550.07 514.00 550.07 512.76 547.92 510.28 547.92 509.03 550.07 506.55 550.07 505.31 547.92 502.83 547.92 501.58 550.07 499.10 550.07 497.86 547.92 495.38 547.92 494.14 550.07 491.65 550.07 490.41 547.92 487.93 547.92 486.69 550.07 484.20 550.07 482.96 547.92 480.48 547.92 479.24 550.07 476.75 550.07 475.51 547.92 473.03 547.92 471.79 550.07 469.31 550.07 468.06 547.92 465.58 547.92 464.34 550.07 461.86 550.07 460.61 547.92 458.13 547.92 456.89 550.07 454.41 550.07 453.17 547.92 450.68 547.92 449.44 550.07 446.96 550.07 445.72 547.92 446.96 545.77 445.72 543.62 446.96 541.47 445.72 539.32 446.96 537.17 445.72 535.02 446.96 532.87 445.72 530.72 446.96 528.57 445.72 526.42 446.96 524.27 445.72 522.12 446.96 519.97 445.72 517.82 446.96 515.67 445.72 513.52 446.96 511.37 445.72 509.21 446.96 507.06 445.72 504.91 446.96 502.76 445.72 500.61 446.96 498.46 445.72 496.31 446.96 494.16 445.72 492.01 446.96 489.86 445.72 487.71 446.96 485.56 445.72 483.41 446.96 481.26 445.72 479.11 446.96 476.96 445.72 474.81 446.96 472.66 445.72 470.51 446.96 468.36 445.72 466.21 446.96 464.06 445.72 461.91 446.96 459.76 445.72 457.61 446.96 455.46 445.72 453.31 446.96 451.16 445.72 449.01 446.96 446.85 445.72 444.70 446.96 442.55 445.72 440.40 446.96 438.25 445.72 436.10 446.96 433.95 445.72 431.80 446.96 429.65 445.72 427.50 446.96 425.35 445.72 423.20 446.96 421.05 445.72 418.90 446.96 416.75 445.72 414.60 446.96 412.45 445.72 410.30 446.96 408.15 445.72 406.00 446.96 403.85 445.72 401.70 446.96 399.55 445.72 397.40 446.96 395.25 445.72 393.10 446.96 390.95 445.72 388.80 446.96 386.65 445.72 384.50 446.96 382.34 445.72 380.19 446.96 378.04 445.72 375.89 446.96 373.74 445.72 371.59 446.96 369.44 445.72 367.29 446.96 365.14 445.72 362.99 446.96 360.84 445.72 358.69 446.96 356.54 445.72 354.39 446.96 352.24 445.72 350.09 446.96 347.94 445.72 345.79 446.96 343.64 445.72 341.49 446.96 339.34 445.72 337.19 446.96 335.04 445.72 332.89 446.96 330.74 445.72 328.59 446.96 326.44 445.72 324.29 446.96 322.14 445.72 319.98 446.96 317.83 445.72 315.68 446.96 313.53 445.72 311.38 446.96 309.23 445.72 307.08 446.96 304.93 445.72 302.78 446.96 300.63 445.72 298.48 446.96 296.33 445.72 294.18 446.96 292.03 445.72 289.88 446.96 287.73 445.72 285.58 446.96 283.43 445.72 281.28 446.96 279.13 445.72 276.98 446.96 274.83 445.72 272.68 446.96 270.53 445.72 268.38 446.96 266.23 445.72 264.08 446.96 261.93 445.72 259.78 446.96 257.62 445.72 255.47 446.96 253.32 445.72 251.17 446.96 249.02 445.72 246.87 446.96 244.72 445.72 242.57 446.96 240.42 445.72 238.27 446.96 236.12 445.72 233.97 446.96 231.82 445.72 229.67 446.96 227.52 445.72 225.37 446.96 223.22 445.72 221.07 446.96 218.92 445.72 216.77 446.96 214.62 445.72 212.47 446.96 210.32 445.72 208.17 446.96 206.02 445.72 203.87 446.96 201.72 445.72 199.57 446.96 197.42 445.72 195.27 446.96 193.11 445.72 190.96 446.96 188.81 445.72 186.66 446.96 184.51 445.72 182.36 446.96 180.21 445.72 178.06 446.96 175.91 445.72 173.76 446.96 171.61 445.72 169.46 446.96 167.31 445.72 165.16 446.96 163.01 445.72 160.86 446.96 158.71 445.72 156.56 446.96 154.41 445.72 152.26 446.96 150.11 445.72 147.96 446.96 145.81 445.72 143.66 446.96 141.51 445.72 139.36 446.96 137.21 445.72 135.06 446.96 132.91 445.72 130.75 446.96 128.60 445.72 126.45 446.96 124.30 445.72 122.15 446.96 120.00 445.72 117.85 446.96 115.70 445.72 113.55 446.96 111.40 445.72 109.25 446.96 107.10 445.72 104.95 446.96 102.80 445.72 100.65 446.96 98.50Z" fill="none" stroke="#6a6e58" stroke-width="0.5"/>
<path d="M807.8 409.5C810.5 411 810.8 416 808 419.5" stroke="#d9363a" stroke-width="0.9" fill="none"/>
</svg>
<svg class="a" style="left:11.1px;top:27.1px" width="8.90" height="11.60" viewBox="0 0 24 24" preserveAspectRatio="none"><path d="M1.5 1H15L22.5 7.5V23H1.5Z" fill="#fff" stroke="#7a7a7a" stroke-width="2"/><path d="M15 1V7.5H22.5" fill="#e0e0e0" stroke="#7a7a7a" stroke-width="1.6"/></svg>
<svg class="a" style="left:26.8px;top:28.1px" width="12.30" height="9.60" viewBox="0 0 24 24" preserveAspectRatio="none"><path d="M1 1H8L10 4H20V23H1Z" fill="#e8c53a"/><path d="M1 8H23L20 23H1Z" fill="#f6d84f"/></svg>
<svg class="a" style="left:44.9px;top:27.1px" width="10.90" height="11.30" viewBox="0 0 24 24" preserveAspectRatio="none"><rect x="0.5" y="0.5" width="23" height="23" rx="3" fill="#5b8dc8"/><rect x="4" y="2" width="16" height="9" fill="#b8b8b8"/><path d="M6 4.5H18M6 7.5H18" stroke="#9a9a9a" stroke-width="1"/><rect x="5" y="15" width="14" height="8" fill="#f4f4f4"/><rect x="6.5" y="16.5" width="3" height="5" fill="#555"/></svg>
<svg class="a" style="left:62.3px;top:27.4px" width="12.30" height="12.10" viewBox="0 0 24 24" preserveAspectRatio="none"><path d="M1 1H15L20 6V22H1Z" fill="#fff" stroke="#aaa" stroke-width="1"/><path d="M1 1H9V22H1Z" fill="#f1cf3c"/><path d="M3 4V20" stroke="#c9a62a" stroke-width="1"/><rect x="11" y="11" width="13" height="13" rx="1.5" fill="#d8b12b"/><circle cx="17.5" cy="17.5" r="3.3" fill="none" stroke="#fff" stroke-width="1.6"/></svg>
<svg class="a" style="left:79.8px;top:27.1px" width="12.30" height="11.60" viewBox="0 0 24 24" preserveAspectRatio="none"><path d="M1 1H17L23 7V23H1Z" fill="#eef4fb" stroke="#8a8a8a" stroke-width="1.6"/><path d="M5 6L12 13" stroke="#777" stroke-width="3.5"/><path d="M12 13L19 21" stroke="#e2c12f" stroke-width="4"/><path d="M6 4L8 8" stroke="#fff" stroke-width="1"/></svg>
<svg class="a" style="left:97.5px;top:27.5px" width="12.00" height="11.30" viewBox="0 0 24 24" preserveAspectRatio="none"><circle cx="5.5" cy="5.5" r="5" fill="#d8622a"/><rect x="0.5" y="13" width="10" height="10.5" fill="#6db36d"/><path d="M12.5 10L23 1.5" stroke="#3a6fb5" stroke-width="2.8"/><text x="12" y="23" font-size="12" font-family="Liberation Sans" fill="#444">a</text></svg>
<svg class="a" style="left:116.5px;top:27.5px" width="4" height="11" viewBox="0 0 4 11"><circle cx="0.8" cy="1.0" r="0.5" fill="#dcdcdc"/><circle cx="2.8" cy="1.0" r="0.5" fill="#dcdcdc"/><circle cx="0.8" cy="3.8" r="0.5" fill="#dcdcdc"/><circle cx="2.8" cy="3.8" r="0.5" fill="#dcdcdc"/><circle cx="0.8" cy="6.6" r="0.5" fill="#dcdcdc"/><circle cx="2.8" cy="6.6" r="0.5" fill="#dcdcdc"/><circle cx="0.8" cy="9.4" r="0.5" fill="#dcdcdc"/><circle cx="2.8" cy="9.4" r="0.5" fill="#dcdcdc"/></svg>
<div class="a pressed" style="left:121px;top:25px;width:16.7px;height:16.5px"></div>
<svg class="a" style="left:124px;top:26.5px" width="12.00" height="13.00" viewBox="0 0 24 24" preserveAspectRatio="none"><g stroke-linecap="round" stroke-linejoin="round"><path d="M9 12V4M12.5 11V2.5M16 11.5V4M19.3 13V7M7 16.5L3 12.5" stroke="#3a3a3a" stroke-width="4.4" fill="none"/><path d="M7.5 11H20.5V17C20.5 20.5 18.5 22.5 16 22.5H11C9 22.5 7.5 20 6 18L7.5 14Z" fill="#3a3a3a" stroke="#3a3a3a" stroke-width="2"/><path d="M9 12V4M12.5 11V2.5M16 11.5V4M19.3 13V7M7 16.5L3 12.5" stroke="#fff" stroke-width="2.4" fill="none"/><path d="M7.5 11H20.5V17C20.5 20.5 18.5 22.5 16 22.5H11C9 22.5 7.5 20 6 18L7.5 14Z" fill="#fff"/></g></svg>
<svg class="a" style="left:141px;top:27.3px" width="12.00" height="11.50" viewBox="0 0 24 24" preserveAspectRatio="none"><rect x="1" y="1" width="7" height="7" fill="#f2de2a"/><path d="M12 1L17 6L12 11L7 6Z M12 13L17 18L12 23L7 18Z M1 12L6 7L11 12L6 17Z M13 12L18 7L23 12L18 17Z" fill="#4f86c6"/><path d="M12 7L17 12L12 17L7 12Z" fill="#f4ea30"/></svg>
<svg class="a" style="left:158px;top:27px" width="13.00" height="12.50" viewBox="0 0 24 24" preserveAspectRatio="none"><circle cx="14.5" cy="9.5" r="8" fill="#f8f8f8" stroke="#555" stroke-width="1.6"/><path d="M9 15L1.5 22.5" stroke="#222" stroke-width="2.8"/><path d="M6.5 17.5L1.5 22.5" stroke="#e2c12f" stroke-width="3.2"/><path d="M14.5 4.5V14.5M9.5 9.5H19.5" stroke="#4a84c4" stroke-width="2.8"/></svg>
<svg class="a" style="left:175.5px;top:27px" width="13.00" height="12.50" viewBox="0 0 24 24" preserveAspectRatio="none"><circle cx="14.5" cy="9.5" r="8" fill="#f8f8f8" stroke="#555" stroke-width="1.6"/><path d="M9 15L1.5 22.5" stroke="#222" stroke-width="2.8"/><path d="M6.5 17.5L1.5 22.5" stroke="#e2c12f" stroke-width="3.2"/><path d="M9.5 9.5H19.5" stroke="#4a84c4" stroke-width="2.8"/></svg>
<svg class="a" style="left:193px;top:27px" width="14.00" height="12.50" viewBox="0 0 24 24" preserveAspectRatio="none"><path d="M4 1H11V8H4Z M15 1H23V8H15Z M15 13H23V21H15Z" fill="#4f86c6"/><path d="M11 5H15M19 8V13" stroke="#999" stroke-width="0.8"/><path d="M9 14L2 21" stroke="#222" stroke-width="2.8"/><path d="M5.5 17.5L2 21" stroke="#e2c12f" stroke-width="3"/></svg>
<svg class="a" style="left:211px;top:26.8px" width="13.50" height="12.70" viewBox="0 0 24 24" preserveAspectRatio="none"><rect x="1.5" y="2" width="6" height="13" fill="#f0d23a"/><circle cx="14.5" cy="9.5" r="8" fill="#fbf7ec" stroke="#555" stroke-width="1.6"/><path d="M9 15L1.5 22.5" stroke="#222" stroke-width="2.8"/><path d="M6.5 17.5L1.5 22.5" stroke="#e2c12f" stroke-width="3.2"/><path d="M14.5 2.5A7 7 0 0 1 14.5 16.5Z" fill="#f4efe6"/></svg>
<svg class="a" style="left:229px;top:26.8px" width="13.50" height="12.70" viewBox="0 0 24 24" preserveAspectRatio="none"><rect x="1.5" y="2" width="6" height="13" fill="#e8e8e8" stroke="#c8c8c8"/><circle cx="14.5" cy="9.5" r="8" fill="#f2f2f2" stroke="#555" stroke-width="1.6"/><path d="M9 15L1.5 22.5" stroke="#222" stroke-width="2.8"/><path d="M6.5 17.5L1.5 22.5" stroke="#e2c12f" stroke-width="3.2"/></svg>
<svg class="a" style="left:247px;top:26.8px" width="13.50" height="12.70" viewBox="0 0 24 24" preserveAspectRatio="none"><rect x="4" y="4" width="10" height="10" fill="none" stroke="#d0d0d0" stroke-width="1.2"/><circle cx="14.5" cy="9.5" r="8" fill="none" stroke="#d4d4d4" stroke-width="1.6"/><path d="M9 15L1.5 22.5" stroke="#d8d8d8" stroke-width="2.5"/><path d="M11 7V12M14 7V12" stroke="#d0d0d0" stroke-width="1"/></svg>
<svg class="a" style="left:264px;top:26.8px" width="13.00" height="12.70" viewBox="0 0 24 24" preserveAspectRatio="none"><circle cx="14.5" cy="9.5" r="8" fill="#f6f6f6" stroke="#444" stroke-width="1.6"/><path d="M9 15L1.5 22.5" stroke="#222" stroke-width="2.8"/><path d="M6.5 17.5L1.5 22.5" stroke="#e2c12f" stroke-width="3.2"/><rect x="12.5" y="12" width="11.5" height="12" fill="#4f86c6"/><path d="M20 14L15.5 18L20 22" stroke="#fff" stroke-width="2" fill="none"/></svg>
<svg class="a" style="left:282px;top:26.8px" width="13.00" height="12.70" viewBox="0 0 24 24" preserveAspectRatio="none"><circle cx="14.5" cy="9.5" r="8" fill="none" stroke="#d0d0d0" stroke-width="1.6"/><path d="M9 15L1.5 22.5" stroke="#d8d8d8" stroke-width="2.5"/><rect x="12.5" y="12" width="11" height="12" fill="#e8e8e8" stroke="#d8d8d8"/><path d="M16 14L20 18L16 22" stroke="#fff" stroke-width="1.8" fill="none"/></svg>
<svg class="a" style="left:300px;top:27.5px" width="12.00" height="12.00" viewBox="0 0 24 24" preserveAspectRatio="none"><path d="M1 1H18V19L14 22H1Z" fill="#e2e2e2" stroke="#bdbdbd" stroke-width="1.2"/><path d="M3 2V20" stroke="#f4f4f4" stroke-width="1"/><rect x="12" y="12" width="12" height="12" rx="1.5" fill="#d8b12b"/><circle cx="18" cy="18" r="2.8" fill="none" stroke="#fff" stroke-width="1.4"/></svg>
<svg class="a" style="left:317px;top:27.5px" width="13.00" height="12.00" viewBox="0 0 24 24" preserveAspectRatio="none"><path d="M1 13L7 5H21L22 13L15 16H1Z" fill="#e4e4e4" stroke="#bdbdbd" stroke-width="1.2"/><rect x="12" y="12" width="12" height="12" rx="1.5" fill="#d8b12b"/><circle cx="18" cy="18" r="2.8" fill="none" stroke="#fff" stroke-width="1.4"/></svg>
<svg class="a" style="left:336.5px;top:27px" width="11.00" height="12.50" viewBox="0 0 24 24" preserveAspectRatio="none"><path d="M2 0.5H14V22L8 17L2 22Z" fill="#5b8dc8"/><path d="M10 1V20" stroke="#3a6aa8" stroke-width="1"/><rect x="12" y="12" width="12" height="12" rx="1.5" fill="#d8b12b"/><circle cx="18" cy="18" r="2.8" fill="none" stroke="#fff" stroke-width="1.4"/></svg>
<svg class="a" style="left:353px;top:27px" width="11.00" height="11.50" viewBox="0 0 24 24" preserveAspectRatio="none"><path d="M1 1H23V23H1Z" fill="#e6e6e6" stroke="#b8b8b8" stroke-width="1.2"/><path d="M4 2V22" stroke="#f6f6f6" stroke-width="1.5"/><path d="M12 0H18V13L15 10L12 13Z" fill="#4f86c6"/></svg>
<svg class="a" style="left:370px;top:26.5px" width="12.20" height="12.10" viewBox="0 0 24 24" preserveAspectRatio="none"><circle cx="12" cy="12" r="10.5" fill="#f8f8f8" stroke="#7e7e7e" stroke-width="1.8"/><path d="M12 5V12.5L16.5 17" stroke="#777" stroke-width="1.6" fill="none"/></svg>
<svg class="a" style="left:388px;top:27.5px" width="11.50" height="11.30" viewBox="0 0 24 24" preserveAspectRatio="none"><path d="M2.5 11A9 9 0 0 1 19 5.5L22 2.5V11.5H13L16.5 8A5.5 5.5 0 0 0 7 11Z" fill="#3d86cf"/><path d="M21.5 13A9 9 0 0 1 5 18.5L2 21.5V12.5H11L7.5 16A5.5 5.5 0 0 0 17 13Z" fill="#3d86cf"/></svg>
<svg class="a" style="left:415.0px;top:27.5px" width="4" height="11" viewBox="0 0 4 11"><circle cx="0.8" cy="1.0" r="0.5" fill="#dcdcdc"/><circle cx="2.8" cy="1.0" r="0.5" fill="#dcdcdc"/><circle cx="0.8" cy="3.8" r="0.5" fill="#dcdcdc"/><circle cx="2.8" cy="3.8" r="0.5" fill="#dcdcdc"/><circle cx="0.8" cy="6.6" r="0.5" fill="#dcdcdc"/><circle cx="2.8" cy="6.6" r="0.5" fill="#dcdcdc"/><circle cx="0.8" cy="9.4" r="0.5" fill="#dcdcdc"/><circle cx="2.8" cy="9.4" r="0.5" fill="#dcdcdc"/></svg>
<svg class="a" style="left:422.3px;top:27.1px" width="11.90" height="11.40" viewBox="0 0 24 24" preserveAspectRatio="none"><rect x="1" y="1" width="21" height="20" fill="#f2f2f2" stroke="#9a9a9a" stroke-width="1"/><rect x="1" y="3" width="13" height="13" fill="#f1e12c"/><path d="M10 9L21 19H16L19 23.5L17 24L14 19.5L10 23Z" fill="#fff" stroke="#444" stroke-width="1.1"/></svg>
<svg class="a" style="left:438.5px;top:32.5px" width="3.6" height="2" viewBox="0 0 4 2.2"><path d="M0 0H4L2 2.2Z" fill="#5a5a5a"/></svg>
<svg class="a" style="left:447px;top:27px" width="11.50" height="11.50" viewBox="0 0 24 24" preserveAspectRatio="none"><text x="0" y="13" font-size="15" font-family="Liberation Serif" fill="#333">ε</text><rect x="6" y="9" width="17" height="14" fill="#f1e12c" stroke="#c9b830" stroke-width="1"/><path d="M10 13H17M10 17H14" stroke="#555" stroke-width="1"/></svg>
<svg class="a" style="left:462.5px;top:32.5px" width="3.6" height="2" viewBox="0 0 4 2.2"><path d="M0 0H4L2 2.2Z" fill="#5a5a5a"/></svg>
<svg class="a" style="left:471px;top:27.5px" width="12.00" height="11.50" viewBox="0 0 24 24" preserveAspectRatio="none"><rect x="1" y="1" width="13" height="12" fill="#f1e12c" stroke="#d6c640" stroke-width="0.8"/><rect x="5" y="5" width="13" height="13" fill="#f1e12c" stroke="#d6c640" stroke-width="0.8"/><rect x="12" y="12" width="11" height="12" rx="1" fill="#e23a3a"/><path d="M14 15L21 22M21 15L14 22" stroke="#fff" stroke-width="1.2"/></svg>
<svg class="a" style="left:486px;top:32.5px" width="3.6" height="2" viewBox="0 0 4 2.2"><path d="M0 0H4L2 2.2Z" fill="#5a5a5a"/></svg>
<svg class="a" style="left:496px;top:32px" width="4" height="3" viewBox="0 0 4 3"><path d="M0 0L1.5 1.5L0 3M2 0L3.5 1.5L2 3" stroke="#555" stroke-width="0.7" fill="none"/></svg>
<svg class="a" style="left:505.0px;top:27.5px" width="4" height="11" viewBox="0 0 4 11"><circle cx="0.8" cy="1.0" r="0.5" fill="#dcdcdc"/><circle cx="2.8" cy="1.0" r="0.5" fill="#dcdcdc"/><circle cx="0.8" cy="3.8" r="0.5" fill="#dcdcdc"/><circle cx="2.8" cy="3.8" r="0.5" fill="#dcdcdc"/><circle cx="0.8" cy="6.6" r="0.5" fill="#dcdcdc"/><circle cx="2.8" cy="6.6" r="0.5" fill="#dcdcdc"/><circle cx="0.8" cy="9.4" r="0.5" fill="#dcdcdc"/><circle cx="2.8" cy="9.4" r="0.5" fill="#dcdcdc"/></svg>
<svg class="a" style="left:511px;top:26.8px" width="13.50" height="12.20" viewBox="0 0 24 24" preserveAspectRatio="none"><circle cx="9.5" cy="9.5" r="9" fill="#4f86c6"/><text x="6.5" y="16" font-size="13" font-style="italic" font-weight="bold" font-family="Liberation Serif" fill="#fff">i</text><path d="M13 12L23 21H18.5L21 24L19 24.5L16.5 21L13 24Z" fill="#fff" stroke="#666" stroke-width="1"/></svg>
<svg class="a" style="left:529px;top:27.5px" width="12.50" height="11.20" viewBox="0 0 24 24" preserveAspectRatio="none"><rect x="1" y="1" width="22" height="22" fill="#f4f4f4" stroke="#707070" stroke-width="1.5"/><path d="M1 8H23M1 13H23M1 18H23" stroke="#a8a8a8" stroke-width="0.8"/><path d="M8 1V23M16 1V23" stroke="#a8a8a8" stroke-width="0.8"/><circle cx="8" cy="4.5" r="2.3" fill="#e04a4a"/><circle cx="16" cy="4.5" r="2.3" fill="#e04a4a"/><path d="M4 10.5H12" stroke="#6ab56a" stroke-width="2"/><path d="M4 15.5H20" stroke="#4f86c6" stroke-width="2"/></svg>
<svg class="a" style="left:547px;top:27.3px" width="12.00" height="11.50" viewBox="0 0 24 24" preserveAspectRatio="none"><path d="M12 0.5V23.5M0.5 12H23.5M3.5 3.5L20.5 20.5M20.5 3.5L3.5 20.5" stroke="#4f86c6" stroke-width="2.5"/><circle cx="12" cy="12" r="6" fill="#4f86c6"/><circle cx="12" cy="12" r="3" fill="#f4f4f4"/></svg>
<svg class="a" style="left:566px;top:27.5px" width="9.50" height="11.00" viewBox="0 0 24 24" preserveAspectRatio="none"><path d="M1 1H22V6H8.5L15 12L8.5 18H22V23H1V19L8.5 12L1 5Z" fill="#9b2aa6"/></svg>
<svg class="a" style="left:582px;top:27.5px" width="12.50" height="11.30" viewBox="0 0 24 24" preserveAspectRatio="none"><rect x="1" y="1" width="22" height="22" fill="#cfe0f4" stroke="#8eb3de" stroke-width="1"/><path d="M1 6H23M1 11H23M1 16H23M1 21H23M8 1V23" stroke="#f4f8fc" stroke-width="1"/><path d="M11 8H20M11 13H20M11 18H20" stroke="#9ab8dc" stroke-width="0.8"/></svg>
<svg class="a" style="left:598.5px;top:32.5px" width="3.6" height="2" viewBox="0 0 4 2.2"><path d="M0 0H4L2 2.2Z" fill="#5a5a5a"/></svg>
<svg class="a" style="left:606px;top:28.5px" width="12.50" height="9.20" viewBox="0 0 24 24" preserveAspectRatio="none"><path d="M2 3H22" stroke="#4a6ea8" stroke-width="2.5"/><rect x="1" y="10" width="22" height="13" rx="2" fill="#8a8a8a"/><path d="M4 12V16M8 12V18M12 12V16M16 12V18M20 12V16" stroke="#c8c8c8" stroke-width="1"/></svg>
<svg class="a" style="left:622.5px;top:32.5px" width="3.6" height="2" viewBox="0 0 4 2.2"><path d="M0 0H4L2 2.2Z" fill="#5a5a5a"/></svg>
<svg class="a" style="left:629.5px;top:27px" width="13.00" height="11.50" viewBox="0 0 24 24" preserveAspectRatio="none"><path d="M2 1H22C23 1 23.5 2 23.5 3V12C23.5 13 23 14 22 14H9L5.5 19V14H2C1 14 0.5 13 0.5 12V3C0.5 2 1 1 2 1Z" fill="#f7eb8f" stroke="#d9c45a" stroke-width="1"/><circle cx="4.5" cy="20" r="3.5" fill="#3a9a4a"/><path d="M3 20L4.5 21.5L7 18" stroke="#f0e070" stroke-width="1" fill="none"/></svg>
<svg class="a" style="left:647px;top:26.8px" width="12.50" height="12.70" viewBox="0 0 24 24" preserveAspectRatio="none"><circle cx="10" cy="10" r="7" fill="none" stroke="#d4d4d4" stroke-width="4"/><circle cx="10" cy="10" r="2.5" fill="#e6e6e6"/><path d="M14.5 14.5L23 23" stroke="#d4d4d4" stroke-width="2.5"/></svg>
<svg class="a" style="left:664.5px;top:32.5px" width="3.6" height="2" viewBox="0 0 4 2.2"><path d="M0 0H4L2 2.2Z" fill="#5a5a5a"/></svg>
<svg class="a" style="left:674.0px;top:27.5px" width="4" height="11" viewBox="0 0 4 11"><circle cx="0.8" cy="1.0" r="0.5" fill="#dcdcdc"/><circle cx="2.8" cy="1.0" r="0.5" fill="#dcdcdc"/><circle cx="0.8" cy="3.8" r="0.5" fill="#dcdcdc"/><circle cx="2.8" cy="3.8" r="0.5" fill="#dcdcdc"/><circle cx="0.8" cy="6.6" r="0.5" fill="#dcdcdc"/><circle cx="2.8" cy="6.6" r="0.5" fill="#dcdcdc"/><circle cx="0.8" cy="9.4" r="0.5" fill="#dcdcdc"/><circle cx="2.8" cy="9.4" r="0.5" fill="#dcdcdc"/></svg>
<svg class="a" style="left:680px;top:28px" width="11.50" height="8.00" viewBox="0 0 24 24" preserveAspectRatio="none"><path d="M6.5 1H23.5V23H6.5L0.5 12Z" fill="#f0d53c" stroke="#caa92a" stroke-width="1"/><text x="5" y="17" font-size="11" font-weight="bold" font-family="Liberation Sans" fill="#4a4a30">abc</text></svg>
<svg class="a" style="left:698px;top:27.5px" width="12.00" height="11.50" viewBox="0 0 24 24" preserveAspectRatio="none"><circle cx="9" cy="9" r="8.5" fill="#3b9a3b"/><path d="M9 9V0.5A8.5 8.5 0 0 1 17.5 9Z" fill="#e6352a"/><path d="M9 9L9 0.5A8.5 8.5 0 0 0 1.5 5Z" fill="#f2d53c"/><rect x="10" y="9" width="4.5" height="15" fill="#3b9a3b"/><rect x="14.5" y="15" width="5" height="9" fill="#c8352a"/><rect x="6" y="14" width="4" height="10" fill="#f2d53c"/><path d="M7 10L15 5" stroke="#c8352a" stroke-width="3"/></svg>
<div class="a" style="left:714.5px;top:27px;width:0.8px;height:12px;background:#d8d8d8"></div>
<svg class="a" style="left:718px;top:27.5px" width="12.50" height="11.50" viewBox="0 0 24 24" preserveAspectRatio="none"><path d="M7 1.5H22V14H7L1 7.8Z" fill="#c7dcf3" stroke="#86b0de" stroke-width="1"/><text x="6" y="11.5" font-size="9" font-family="Liberation Sans" fill="#333">ab</text><path d="M18 3V13" stroke="#4f86c6" stroke-width="1.2"/><circle cx="17" cy="18.5" r="5" fill="#b01c22"/></svg>
<svg class="a" style="left:736px;top:28px" width="12.50" height="9.00" viewBox="0 0 24 24" preserveAspectRatio="none"><path d="M6.5 1H23.5V23H6.5L0.5 12Z" fill="#e8353a"/><path d="M8.5 5H21.5V19H8.5L4.5 12Z" fill="#fff"/><text x="7" y="17" font-size="10" font-weight="bold" font-family="Liberation Sans" fill="#e8353a">abc</text></svg>
<div class="a" style="left:753.5px;top:27px;width:0.8px;height:12px;background:#d8d8d8"></div>
<svg class="a" style="left:758px;top:27.5px" width="12.50" height="11.50" viewBox="0 0 24 24" preserveAspectRatio="none"><path d="M6 3H22V14H6L1 8.5Z" fill="#e6e4de" stroke="#d8d6d0" stroke-width="1"/><text x="6.5" y="11.5" font-size="8" font-family="Liberation Sans" fill="#c4c2bc">abc</text><circle cx="16.5" cy="19" r="4.5" fill="#d6d6d6"/><circle cx="16.5" cy="19" r="2" fill="#ececec"/></svg>
<svg class="a" style="left:776px;top:27.5px" width="12.50" height="11.50" viewBox="0 0 24 24" preserveAspectRatio="none"><path d="M6 3H22V14H6L1 8.5Z" fill="#e6e4de" stroke="#d8d6d0" stroke-width="1"/><text x="6.5" y="11.5" font-size="8" font-family="Liberation Sans" fill="#c4c2bc">abc</text><ellipse cx="14" cy="20" rx="7" ry="3.5" fill="#e4e4e4" stroke="#d0d0d0"/><circle cx="14" cy="20" r="1.6" fill="#bbb"/></svg>
<svg class="a" style="left:793.5px;top:27.5px" width="12.50" height="12.00" viewBox="0 0 24 24" preserveAspectRatio="none"><path d="M6 3H22V14H6L1 8.5Z" fill="#e6e4de" stroke="#d8d6d0" stroke-width="1"/><text x="6.5" y="11.5" font-size="8" font-family="Liberation Sans" fill="#c4c2bc">abc</text><rect x="13" y="15" width="10" height="9" rx="1" fill="#f4f4f4" stroke="#cfcfcf" stroke-width="1.4"/><path d="M15 19.5H21" stroke="#c4c4c4" stroke-width="2"/></svg>
<svg class="a" style="left:811px;top:27.5px" width="12.50" height="12.00" viewBox="0 0 24 24" preserveAspectRatio="none"><path d="M6 3H22V14H6L1 8.5Z" fill="#e6e4de" stroke="#d8d6d0" stroke-width="1"/><text x="6.5" y="11.5" font-size="8" font-family="Liberation Sans" fill="#c4c2bc">abc</text><rect x="13" y="15" width="10" height="9" rx="1" fill="#f4f4f4" stroke="#cfcfcf" stroke-width="1.4"/><circle cx="18" cy="19.5" r="2.5" fill="none" stroke="#c4c4c4" stroke-width="1.2"/></svg>
<svg class="a" style="left:828.5px;top:27.5px" width="12.50" height="12.00" viewBox="0 0 24 24" preserveAspectRatio="none"><path d="M6 3H22V14H6L1 8.5Z" fill="#e6e4de" stroke="#d8d6d0" stroke-width="1"/><text x="6.5" y="11.5" font-size="8" font-family="Liberation Sans" fill="#c4c2bc">abc</text><rect x="13" y="15" width="10" height="9" rx="1" fill="#f4f4f4" stroke="#cfcfcf" stroke-width="1.4"/><path d="M15 22L21 16.5" stroke="#c4c4c4" stroke-width="1.5"/></svg>
<svg class="a" style="left:848.0px;top:27.5px" width="4" height="11" viewBox="0 0 4 11"><circle cx="0.8" cy="1.0" r="0.5" fill="#dcdcdc"/><circle cx="2.8" cy="1.0" r="0.5" fill="#dcdcdc"/><circle cx="0.8" cy="3.8" r="0.5" fill="#dcdcdc"/><circle cx="2.8" cy="3.8" r="0.5" fill="#dcdcdc"/><circle cx="0.8" cy="6.6" r="0.5" fill="#dcdcdc"/><circle cx="2.8" cy="6.6" r="0.5" fill="#dcdcdc"/><circle cx="0.8" cy="9.4" r="0.5" fill="#dcdcdc"/><circle cx="2.8" cy="9.4" r="0.5" fill="#dcdcdc"/></svg>
<svg class="a" style="left:855.3px;top:27px" width="11.20" height="11.60" viewBox="0 0 24 24" preserveAspectRatio="none"><rect x="0.5" y="0.5" width="23" height="23" rx="2" fill="#4c82c2"/><rect x="0.5" y="0.5" width="5" height="23" rx="1" fill="#2a3a4e"/><text x="9.5" y="15" font-size="13" font-family="Liberation Sans" fill="#dfeaf6">?</text><circle cx="13" cy="19.5" r="1" fill="#dfeaf6"/></svg>
<svg class="a" style="left:2.5px;top:48.5px" width="4" height="11" viewBox="0 0 4 11"><circle cx="0.8" cy="1.0" r="0.5" fill="#dcdcdc"/><circle cx="2.8" cy="1.0" r="0.5" fill="#dcdcdc"/><circle cx="0.8" cy="3.8" r="0.5" fill="#dcdcdc"/><circle cx="2.8" cy="3.8" r="0.5" fill="#dcdcdc"/><circle cx="0.8" cy="6.6" r="0.5" fill="#dcdcdc"/><circle cx="2.8" cy="6.6" r="0.5" fill="#dcdcdc"/><circle cx="0.8" cy="9.4" r="0.5" fill="#dcdcdc"/><circle cx="2.8" cy="9.4" r="0.5" fill="#dcdcdc"/></svg>
<svg class="a" style="left:10px;top:48px" width="12.00" height="12.50" viewBox="0 0 24 24" preserveAspectRatio="none"><path d="M3 19L14 2L18 4.5L7 21.5Z" fill="#dedede" stroke="#d0d0d0"/><path d="M8 21L19 5L22 7L11 23Z" fill="#d2d2d2"/><path d="M3 19L2 23L7 21.5Z" fill="#bbb"/></svg>
<svg class="a" style="left:20.5px;top:58.5px" width="3.6" height="2" viewBox="0 0 4 2.2"><path d="M0 0H4L2 2.2Z" fill="#5a5a5a"/></svg>
<svg class="a" style="left:28px;top:47.5px" width="10.00" height="13.00" viewBox="0 0 24 24" preserveAspectRatio="none"><path d="M2 23L3.5 16L17 1L22.5 5.5L9 20.5Z" fill="#f0d53c" stroke="#8a7a30" stroke-width="1"/><path d="M2 23L3.5 16L9 20.5Z" fill="#f4e0b0"/><path d="M2 23L2.7 20L5 22Z" fill="#333"/></svg>
<svg class="a" style="left:45px;top:48px" width="11.50" height="12.50" viewBox="0 0 24 24" preserveAspectRatio="none"><rect x="1" y="1" width="19" height="20" rx="2" fill="#f0f0f0" stroke="#cfcfcf" stroke-width="1.8"/><rect x="4.5" y="2" width="12" height="7" fill="#dadada"/><rect x="5" y="13" width="10" height="8" fill="#fafafa" stroke="#d6d6d6"/><path d="M14 21L23 12" stroke="#c8c8c8" stroke-width="2.5"/></svg>
<svg class="a" style="left:62px;top:48px" width="12.50" height="12.50" viewBox="0 0 24 24" preserveAspectRatio="none"><path d="M1 7C1 2 9 1 12 4C16 1 23 3 22 8C22 12 16 12 13 11.5C9 13.5 1 12 1 7Z" fill="#d6d6d6"/><rect x="10" y="12" width="12" height="11" rx="1" fill="#f2f2f2" stroke="#c8c0b0" stroke-width="1.6"/><circle cx="16" cy="17.5" r="2.6" fill="#d0d0d0"/></svg>
<svg class="a" style="left:79px;top:48px" width="13.00" height="12.50" viewBox="0 0 24 24" preserveAspectRatio="none"><path d="M3 1L5 9L11 6L13 13" stroke="#cfcfcf" stroke-width="1.4" fill="none"/><circle cx="3" cy="1.5" r="1.5" fill="#ccc"/><circle cx="5" cy="9" r="1.5" fill="#ccc"/><path d="M11 12L23 23M23 12L11 23" stroke="#c2c2c2" stroke-width="2.8"/><path d="M9 16L4 21" stroke="#d4d4d4" stroke-width="2"/></svg>
<svg class="a" style="left:96.5px;top:54.5px" width="3.6" height="2" viewBox="0 0 4 2.2"><path d="M0 0H4L2 2.2Z" fill="#5a5a5a"/></svg>
<svg class="a" style="left:104px;top:48px" width="11.50" height="12.50" viewBox="0 0 24 24" preserveAspectRatio="none"><rect x="1" y="1" width="22" height="22" fill="#e6e2da" stroke="#d6d2ca"/><path d="M1 7H23M1 13H23M1 19H23M7 1V23M13 1V23M19 1V23" stroke="#d6d6d6" stroke-width="0.8"/><path d="M6 22L21 3" stroke="#c0bcb4" stroke-width="2.2"/></svg>
<svg class="a" style="left:122px;top:47.5px" width="9.50" height="13.00" viewBox="0 0 24 24" preserveAspectRatio="none"><rect x="2" y="1" width="20" height="4" fill="#e4d8cc"/><rect x="3" y="6" width="18" height="17" fill="#e6e6e6" stroke="#d4d4d4"/><path d="M7.5 7V22M12 7V22M16.5 7V22" stroke="#cfcfcf" stroke-width="1.5"/></svg>
<svg class="a" style="left:139px;top:49px" width="12.50" height="10.00" viewBox="0 0 24 24" preserveAspectRatio="none"><path d="M1 5L23 15M1 15L23 5" stroke="#d2d2d2" stroke-width="1.6"/><circle cx="19" cy="18" r="4" fill="none" stroke="#c8c8c8" stroke-width="1.8"/><circle cx="19" cy="4" r="3.5" fill="none" stroke="#c8c8c8" stroke-width="1.6"/></svg>
<svg class="a" style="left:158px;top:48px" width="9.00" height="12.50" viewBox="0 0 24 24" preserveAspectRatio="none"><path d="M2 6H13L17 10V23H2Z" fill="#efefef" stroke="#d0d0d0" stroke-width="1.2"/><path d="M7 1H17L22 6V19" fill="none" stroke="#d4d4d4" stroke-width="1.2"/><path d="M6 12L12 19" stroke="#d6d6d6" stroke-width="2"/></svg>
<svg class="a" style="left:176px;top:48px" width="9.50" height="12.50" viewBox="0 0 24 24" preserveAspectRatio="none"><rect x="2" y="2" width="20" height="21" fill="#e8e8e8" stroke="#cccccc" stroke-width="1.3"/><rect x="6" y="1" width="12" height="4" fill="#ddd"/><rect x="6" y="9" width="12" height="11" fill="#f2f2f2" stroke="#d8d8d8"/></svg>
<svg class="a" style="left:193px;top:49.5px" width="10.50" height="10.00" viewBox="0 0 24 24" preserveAspectRatio="none"><path d="M1 9L9 2V6.5C17 6.5 23 10 21 22C18 15 14 12.5 9 12.5V17Z" fill="#d2d2d2"/></svg>
<svg class="a" style="left:210px;top:49.5px" width="10.50" height="10.00" viewBox="0 0 24 24" preserveAspectRatio="none"><path d="M23 9L15 2V6.5C7 6.5 1 10 3 22C6 15 10 12.5 15 12.5V17Z" fill="#d2d2d2"/></svg>
<svg class="a" style="left:229.0px;top:48.5px" width="4" height="11" viewBox="0 0 4 11"><circle cx="0.8" cy="1.0" r="0.5" fill="#dcdcdc"/><circle cx="2.8" cy="1.0" r="0.5" fill="#dcdcdc"/><circle cx="0.8" cy="3.8" r="0.5" fill="#dcdcdc"/><circle cx="2.8" cy="3.8" r="0.5" fill="#dcdcdc"/><circle cx="0.8" cy="6.6" r="0.5" fill="#dcdcdc"/><circle cx="2.8" cy="6.6" r="0.5" fill="#dcdcdc"/><circle cx="0.8" cy="9.4" r="0.5" fill="#dcdcdc"/><circle cx="2.8" cy="9.4" r="0.5" fill="#dcdcdc"/></svg>
<svg class="a" style="left:236px;top:48px" width="12.50" height="12.50" viewBox="0 0 24 24" preserveAspectRatio="none"><path d="M1.5 22C1.5 10 9 2 21 2" fill="none" stroke="#d0d0d0" stroke-width="2"/><path d="M5 13C7 8 10 6 15 5" stroke="#e0e0e0" stroke-width="1"/><rect x="11" y="12" width="12" height="11" rx="1" fill="#f2f2f2" stroke="#cbc3b4" stroke-width="1.6"/><circle cx="17" cy="17.5" r="2.4" fill="#d6d6d6"/></svg>
<svg class="a" style="left:252.5px;top:54.5px" width="3.6" height="2" viewBox="0 0 4 2.2"><path d="M0 0H4L2 2.2Z" fill="#5a5a5a"/></svg>
<svg class="a" style="left:260px;top:48px" width="12.50" height="12.50" viewBox="0 0 24 24" preserveAspectRatio="none"><circle cx="10" cy="10" r="8.5" fill="#f2f2f2" stroke="#cdcdcd" stroke-width="1.6"/><rect x="11" y="12" width="12" height="11" rx="1" fill="#f2f2f2" stroke="#cbc3b4" stroke-width="1.6"/><circle cx="17" cy="17.5" r="2.4" fill="#d6d6d6"/></svg>
<svg class="a" style="left:276.5px;top:54.5px" width="3.6" height="2" viewBox="0 0 4 2.2"><path d="M0 0H4L2 2.2Z" fill="#5a5a5a"/></svg>
<svg class="a" style="left:283.5px;top:48px" width="12.50" height="12.50" viewBox="0 0 24 24" preserveAspectRatio="none"><ellipse cx="11" cy="10" rx="10" ry="6.5" fill="#ececec" stroke="#cdcdcd" stroke-width="1.6" transform="rotate(-20 11 10)"/><circle cx="11" cy="9" r="2" fill="#d4d4d4"/><rect x="11" y="12" width="12" height="11" rx="1" fill="#f2f2f2" stroke="#cbc3b4" stroke-width="1.6"/><circle cx="17" cy="17.5" r="2.4" fill="#d6d6d6"/></svg>
<svg class="a" style="left:300.5px;top:54.5px" width="3.6" height="2" viewBox="0 0 4 2.2"><path d="M0 0H4L2 2.2Z" fill="#5a5a5a"/></svg>
<svg class="a" style="left:308px;top:48px" width="12.50" height="12.50" viewBox="0 0 24 24" preserveAspectRatio="none"><rect x="1.5" y="2" width="18" height="14" fill="#f2f2f2" stroke="#cdcdcd" stroke-width="1.6"/><circle cx="10" cy="9" r="1.3" fill="#ccc"/><rect x="11" y="12" width="12" height="11" rx="1" fill="#f2f2f2" stroke="#cbc3b4" stroke-width="1.6"/><circle cx="17" cy="17.5" r="2.4" fill="#d6d6d6"/></svg>
<svg class="a" style="left:324.5px;top:54.5px" width="3.6" height="2" viewBox="0 0 4 2.2"><path d="M0 0H4L2 2.2Z" fill="#5a5a5a"/></svg>
<svg class="a" style="left:332px;top:48px" width="12.50" height="12.50" viewBox="0 0 24 24" preserveAspectRatio="none"><path d="M10 1.5L19 6V14L10 18.5L1.5 12.5V6Z" fill="#f2f2f2" stroke="#cdcdcd" stroke-width="1.6"/><circle cx="10" cy="10" r="1.3" fill="#ccc"/><rect x="11" y="12" width="12" height="11" rx="1" fill="#f2f2f2" stroke="#cbc3b4" stroke-width="1.6"/><circle cx="17" cy="17.5" r="2.4" fill="#d6d6d6"/></svg>
<svg class="a" style="left:348.5px;top:54.5px" width="3.6" height="2" viewBox="0 0 4 2.2"><path d="M0 0H4L2 2.2Z" fill="#5a5a5a"/></svg>
<svg class="a" style="left:376.0px;top:48.5px" width="4" height="11" viewBox="0 0 4 11"><circle cx="0.8" cy="1.0" r="0.5" fill="#dcdcdc"/><circle cx="2.8" cy="1.0" r="0.5" fill="#dcdcdc"/><circle cx="0.8" cy="3.8" r="0.5" fill="#dcdcdc"/><circle cx="2.8" cy="3.8" r="0.5" fill="#dcdcdc"/><circle cx="0.8" cy="6.6" r="0.5" fill="#dcdcdc"/><circle cx="2.8" cy="6.6" r="0.5" fill="#dcdcdc"/><circle cx="0.8" cy="9.4" r="0.5" fill="#dcdcdc"/><circle cx="2.8" cy="9.4" r="0.5" fill="#dcdcdc"/></svg>
<svg class="a" style="left:382.5px;top:48px" width="12.50" height="12.50" viewBox="0 0 24 24" preserveAspectRatio="none"><path d="M1 1L23 23H1Z" fill="#e2e0dc" stroke="#cdc9c2" stroke-width="1"/><path d="M6 12L13 19H6Z" fill="#f4f4f4" stroke="#d8d4ce"/><path d="M15 1H23V23H15Z" fill="#e4e2de" stroke="#cdc9c2" stroke-width="1"/><path d="M17 4H21M17 8H21M17 12H21M17 16H21" stroke="#d0ccc4" stroke-width="0.8"/></svg>
<svg class="a" style="left:401px;top:48.5px" width="11.50" height="11.50" viewBox="0 0 24 24" preserveAspectRatio="none"><path d="M2.5 21.5L21.5 2.5" stroke="#cdcdcd" stroke-width="1.3"/><circle cx="2.5" cy="21.5" r="2" fill="#c8c8c8"/><circle cx="21.5" cy="2.5" r="2" fill="#c8c8c8"/></svg>
<svg class="a" style="left:418.5px;top:54.5px" width="3.6" height="2" viewBox="0 0 4 2.2"><path d="M0 0H4L2 2.2Z" fill="#5a5a5a"/></svg>
<svg class="a" style="left:424px;top:48px" width="13.00" height="12.50" viewBox="0 0 24 24" preserveAspectRatio="none"><path d="M1 6C1 1.5 9 1 12 3.5C16 1 23 2.5 23 7C23 11 16 11.5 13 10.5C9 12.5 1 11 1 6Z" fill="#d8d8d8" stroke="#cdcdcd" stroke-width="0.8"/><path d="M13.5 11V14" stroke="#c8c8c8" stroke-width="1.4"/><rect x="9" y="13" width="11" height="10.5" rx="1" fill="#f6f6f6" stroke="#c4c4c4" stroke-width="1.6"/><path d="M11.5 18.3H17.5M13 16.5L11.5 18.3L13 20M16 16.5L17.5 18.3L16 20" stroke="#bdbdbd" stroke-width="1.2" fill="none"/></svg>
<svg class="a" style="left:441.5px;top:54.5px" width="3.6" height="2" viewBox="0 0 4 2.2"><path d="M0 0H4L2 2.2Z" fill="#5a5a5a"/></svg>
<svg class="a" style="left:448px;top:48px" width="12.50" height="12.50" viewBox="0 0 24 24" preserveAspectRatio="none"><path d="M1 6C1 1.5 9 1 12 3.5C16 1 23 2.5 23 7C23 11 16 11.5 13 10.5C9 12.5 1 11 1 6Z" fill="#d8d8d8" stroke="#cdcdcd" stroke-width="0.8"/><path d="M13.5 11V14" stroke="#c8c8c8" stroke-width="1.4"/><rect x="9" y="13" width="11" height="10.5" rx="1" fill="#f6f6f6" stroke="#c4c4c4" stroke-width="1.6"/><circle cx="14.5" cy="18.3" r="3" fill="none" stroke="#bdbdbd" stroke-width="1.2"/></svg>
<svg class="a" style="left:466px;top:48px" width="12.50" height="12.50" viewBox="0 0 24 24" preserveAspectRatio="none"><path d="M1 6C1 1.5 9 1 12 3.5C16 1 23 2.5 23 7C23 11 16 11.5 13 10.5C9 12.5 1 11 1 6Z" fill="#d8d8d8" stroke="#cdcdcd" stroke-width="0.8"/><path d="M13.5 11V14" stroke="#c8c8c8" stroke-width="1.4"/><rect x="9" y="13" width="11" height="10.5" rx="1" fill="#f6f6f6" stroke="#c4c4c4" stroke-width="1.6"/><path d="M11.5 18.3H17.5" stroke="#bdbdbd" stroke-width="2.5"/></svg>
<svg class="a" style="left:484px;top:48px" width="12.50" height="12.50" viewBox="0 0 24 24" preserveAspectRatio="none"><circle cx="9" cy="8.5" r="7.5" fill="#dadada" stroke="#cdcdcd"/><path d="M11 10L18 8L23 14L19 22H12L8 16Z" fill="#d6d6d6" stroke="#c8c8c8" stroke-width="1.2"/><path d="M14 13L17 15L14 17Z" fill="#bbb"/></svg>
<svg class="a" style="left:501px;top:48px" width="12.50" height="12.50" viewBox="0 0 24 24" preserveAspectRatio="none"><path d="M1 7C1 2 8 1.5 11 4C15 1.5 22 2.5 22 7C22 11 16 11 13 10C9 12 1 11 1 7Z" fill="#dadada" stroke="#c8c8c8" stroke-width="1.2"/><path d="M5 6L9 4.5" stroke="#f0f0f0" stroke-width="1.5"/><rect x="12" y="13" width="10" height="10" rx="1" fill="#f4f4f4" stroke="#cbc3b4" stroke-width="1.5"/><circle cx="17" cy="18" r="2.2" fill="#d6d6d6"/></svg>
<svg class="a" style="left:519px;top:48px" width="12.50" height="12.50" viewBox="0 0 24 24" preserveAspectRatio="none"><path d="M1 6C1 1.5 9 1 12 3.5C16 1 23 2.5 23 7C23 11 16 11.5 13 10.5C9 12.5 1 11 1 6Z" fill="#d8d8d8" stroke="#cdcdcd" stroke-width="0.8"/><path d="M2 21C0 18 5 13 8 14C10 16 6 22 2 21Z" fill="#d6d6d6"/><path d="M13.5 11V14" stroke="#c8c8c8" stroke-width="1.4"/><rect x="9" y="13" width="11" height="10.5" rx="1" fill="#f6f6f6" stroke="#cbc3b4" stroke-width="1.6"/><circle cx="14.5" cy="18.3" r="2.4" fill="#d0d0d0"/></svg>
<svg class="a" style="left:536.5px;top:48px" width="12.50" height="12.50" viewBox="0 0 24 24" preserveAspectRatio="none"><path d="M1 7C1 2 8 1.5 11 4C15 1.5 22 2.5 22 7C22 11 16 11 13 10C9 12 1 11 1 7Z" fill="#d6d6d6" stroke="#c8c8c8" stroke-width="1"/><path d="M6 6C8 3 12 5 10 8" stroke="#c0c0c0" fill="none"/><rect x="12" y="13" width="10" height="10" rx="1" fill="#f4f4f4" stroke="#cbc3b4" stroke-width="1.5"/><circle cx="17" cy="18" r="2.2" fill="#d6d6d6"/></svg>
<svg class="a" style="left:554px;top:48px" width="12.50" height="12.50" viewBox="0 0 24 24" preserveAspectRatio="none"><path d="M1 7C1 2 8 1.5 11 4C15 1.5 22 2.5 22 7C22 11 16 11 13 10C9 12 1 11 1 7Z" fill="#dedede" stroke="#c8c8c8" stroke-width="1"/><path d="M4 6C5 4 9 4 9 6C8 8 5 8 4 6Z" fill="#f4f4f4" stroke="#c0c0c0" stroke-width="0.8"/><rect x="12" y="13" width="10" height="10" rx="1" fill="#f8f8f8" stroke="#d0d0d0" stroke-width="1.2"/><path d="M14.5 15.5L19.5 20.5M19.5 15.5L14.5 20.5" stroke="#c6c6c6" stroke-width="1.2"/></svg>
<svg class="a" style="left:571.5px;top:48px" width="12.50" height="12.50" viewBox="0 0 24 24" preserveAspectRatio="none"><path d="M1 6C1 1.5 9 1 12 3.5C16 1 23 2.5 23 7C23 11 16 11.5 13 10.5C9 12.5 1 11 1 6Z" fill="#d8d8d8" stroke="#cdcdcd" stroke-width="0.8"/><path d="M2 21C0 18 5 13 8 14C10 16 6 22 2 21Z" fill="#d6d6d6"/><path d="M13.5 11V14" stroke="#c8c8c8" stroke-width="1.4"/><rect x="9" y="13" width="11" height="10.5" rx="1" fill="#f6f6f6" stroke="#d0d0d0" stroke-width="1.6"/><path d="M12.5 15.5L16.5 20.5M16.5 15.5L12.5 20.5" stroke="#c6c6c6" stroke-width="1.2"/></svg>
<svg class="a" style="left:589px;top:48px" width="12.50" height="12.50" viewBox="0 0 24 24" preserveAspectRatio="none"><path d="M2 6C2 2 6 1 10 2C16 1 23 2 23 7C23 11 17 11 14 12C12 14 9 16 8 21C5 22 3 19 3 14C2 11 2 9 2 6Z" fill="#d8d8d8" stroke="#cdcdcd" stroke-width="0.8"/></svg>
<svg class="a" style="left:607px;top:48px" width="12.50" height="12.50" viewBox="0 0 24 24" preserveAspectRatio="none"><path d="M4 21C0 17 11 3 17 2C22 2 23 7 19 12C15 17 9 24 4 21Z" fill="#d8d8d8" stroke="#d0c8b8" stroke-width="1.6"/><path d="M8 16C10 12 13 9 16 6" stroke="#e4e4e4" stroke-width="1.4"/></svg>
<svg class="a" style="left:624.5px;top:48px" width="12.50" height="12.50" viewBox="0 0 24 24" preserveAspectRatio="none"><path d="M1.5 1L7 17L12 3" stroke="#c8c8c8" stroke-width="1.4" fill="none"/><path d="M13 5.5H21M19 3.5L21 5.5L19 7.5" stroke="#cfcfcf" stroke-width="1" fill="none"/><rect x="11" y="12" width="12" height="11" rx="1" fill="#f6f6f6" stroke="#bdbdbd" stroke-width="1.6"/><path d="M14 15L20 21M20 15L14 21" stroke="#d0d0d0" stroke-width="0.8" stroke-dasharray="1 1"/></svg>
<svg class="a" style="left:642px;top:47.5px" width="12.50" height="13.00" viewBox="0 0 24 24" preserveAspectRatio="none"><path d="M11 0.5V23.5" stroke="#cfcfcf" stroke-width="1.5"/><path d="M1 13H23" stroke="#d4d4d4" stroke-width="1.5"/><path d="M14 4V21" stroke="#d8d8d8" stroke-width="1"/><rect x="15.5" y="2" width="6.5" height="6.5" fill="#f8f8f8" stroke="#d2c6ae" stroke-width="1.4"/><rect x="2" y="15.5" width="6.5" height="6.5" fill="#f8f8f8" stroke="#d2c6ae" stroke-width="1.4"/></svg>
<svg class="a" style="left:660px;top:48px" width="12.50" height="12.50" viewBox="0 0 24 24" preserveAspectRatio="none"><circle cx="6.5" cy="7.5" r="6" fill="#d8d8d8" stroke="#cdcdcd"/><circle cx="17" cy="7.5" r="6" fill="#d2d2d2" stroke="#c8c8c8"/><path d="M8 12L16 21M16 12L8 21" stroke="#c4c4c4" stroke-width="1.5"/><circle cx="7.5" cy="20.5" r="2.5" fill="none" stroke="#c0c0c0" stroke-width="1.3"/><circle cx="16.5" cy="20.5" r="2.5" fill="none" stroke="#c0c0c0" stroke-width="1.3"/></svg>
<svg class="a" style="left:677.5px;top:48px" width="12.50" height="12.50" viewBox="0 0 24 24" preserveAspectRatio="none"><circle cx="6.5" cy="7.5" r="6" fill="#d8d8d8" stroke="#cdcdcd"/><circle cx="17" cy="7.5" r="6" fill="#d2d2d2" stroke="#c8c8c8"/><path d="M8 12L16 21M16 12L8 21" stroke="#c4c4c4" stroke-width="1.5"/><circle cx="7.5" cy="20.5" r="2.5" fill="none" stroke="#c0c0c0" stroke-width="1.3"/><circle cx="16.5" cy="20.5" r="2.5" fill="none" stroke="#c0c0c0" stroke-width="1.3"/></svg>
<svg class="a" style="left:695px;top:48px" width="12.50" height="12.50" viewBox="0 0 24 24" preserveAspectRatio="none"><circle cx="6.5" cy="7.5" r="6" fill="#d8d8d8" stroke="#cdcdcd"/><circle cx="17" cy="7.5" r="6" fill="#d2d2d2" stroke="#c8c8c8"/><path d="M6 12L14 22" stroke="#c8c8c8" stroke-width="1.5"/></svg>
<svg class="a" style="left:728px;top:52.5px" width="4.5" height="3.5" viewBox="0 0 4.5 3.5"><path d="M0.3 0L2 1.75L0.3 3.5M2.3 0L4 1.75L2.3 3.5" stroke="#333" stroke-width="0.9" fill="none"/></svg>
<svg class="a" style="left:737.0px;top:48.5px" width="4" height="11" viewBox="0 0 4 11"><circle cx="0.8" cy="1.0" r="0.5" fill="#dcdcdc"/><circle cx="2.8" cy="1.0" r="0.5" fill="#dcdcdc"/><circle cx="0.8" cy="3.8" r="0.5" fill="#dcdcdc"/><circle cx="2.8" cy="3.8" r="0.5" fill="#dcdcdc"/><circle cx="0.8" cy="6.6" r="0.5" fill="#dcdcdc"/><circle cx="2.8" cy="6.6" r="0.5" fill="#dcdcdc"/><circle cx="0.8" cy="9.4" r="0.5" fill="#dcdcdc"/><circle cx="2.8" cy="9.4" r="0.5" fill="#dcdcdc"/></svg>
<svg class="a" style="left:743.5px;top:48px" width="13.00" height="12.50" viewBox="0 0 24 24" preserveAspectRatio="none"><path d="M1 23V4C3 1 6 1 7 5L8 2C10 1 11 3 11 8C12 14 15 20 23 23Z" fill="#e2e0da" stroke="#d4d0c8" stroke-width="1"/><path d="M4 5V23M8 6V23" stroke="#d6d6d6"/></svg>
<svg class="a" style="left:761px;top:48px" width="13.00" height="12.50" viewBox="0 0 24 24" preserveAspectRatio="none"><path d="M1 23V4C3 1 6 1 7 5L8 2C10 1 11 3 11 8C12 14 15 20 23 23Z" fill="#e2e0da" stroke="#d4d0c8" stroke-width="1"/><path d="M4 5V23M8 6V23" stroke="#d6d6d6"/><path d="M12.5 12L18 6.5L23.5 12L18 17.5Z" fill="#f4f4f4" stroke="#cdcdcd" stroke-width="1.2"/></svg>
<svg class="a" style="left:779px;top:48px" width="13.00" height="12.50" viewBox="0 0 24 24" preserveAspectRatio="none"><path d="M1 23V4C3 1 6 1 7 5L8 2C10 1 11 3 11 8C12 14 15 20 23 23Z" fill="#e2e0da" stroke="#d4d0c8" stroke-width="1"/><path d="M4 5V23M8 6V23" stroke="#d6d6d6"/></svg>
<svg class="a" style="left:797px;top:48px" width="13.00" height="12.50" viewBox="0 0 24 24" preserveAspectRatio="none"><path d="M1 23V4C3 1 6 1 7 5L8 2C10 1 11 3 11 8C12 14 15 20 23 23Z" fill="#e2e0da" stroke="#d4d0c8" stroke-width="1"/><path d="M4 5V23M8 6V23" stroke="#d6d6d6"/><path d="M12.5 12L18 6.5L23.5 12L18 17.5Z" fill="#f4f4f4" stroke="#cdcdcd" stroke-width="1.2"/></svg>
<svg class="a" style="left:816px;top:48px" width="12.00" height="12.50" viewBox="0 0 24 24" preserveAspectRatio="none"><circle cx="10" cy="10" r="6.5" fill="#dcd4c6"/><path d="M10 0.5V2.5M0.5 10H2.5M3 3L4.5 4.5M17 3L15.5 4.5M3 17L4.5 15.5M19.5 10H17.5" stroke="#d6cfc2" stroke-width="1.2"/><rect x="12" y="13" width="11" height="10.5" rx="1" fill="#f4f4f4" stroke="#b8bcb4" stroke-width="1.5"/><path d="M15.5 21L17.5 16.5L19.5 21Z" fill="#b8b8b8"/></svg>
<svg class="a" style="left:832.5px;top:48px" width="12.00" height="12.50" viewBox="0 0 24 24" preserveAspectRatio="none"><circle cx="10" cy="10" r="6.5" fill="#dcd4c6"/><path d="M10 0.5V2.5M0.5 10H2.5M3 3L4.5 4.5M17 3L15.5 4.5M3 17L4.5 15.5M19.5 10H17.5" stroke="#d6cfc2" stroke-width="1.2"/><rect x="12" y="13" width="11" height="10.5" rx="1" fill="#f4f4f4" stroke="#b8bcb4" stroke-width="1.5"/><path d="M15.5 16.5H19.5L17.5 21Z" fill="#b8b8b8"/></svg>
<svg class="a" style="left:850px;top:48px" width="12.50" height="12.50" viewBox="0 0 24 24" preserveAspectRatio="none"><circle cx="10" cy="10" r="8.5" fill="#e2e2e2"/><path d="M10 1.5A8.5 8.5 0 0 0 10 18.5A5 8.5 0 0 1 10 1.5Z" fill="#c2c2c2"/><rect x="12" y="13" width="11" height="10.5" rx="1" fill="#f4f4f4" stroke="#b8bcb4" stroke-width="1.5"/><path d="M15.5 21L17.5 16.5L19.5 21Z" fill="#b8b8b8"/></svg>
<svg class="a" style="left:868px;top:48px" width="12.50" height="12.50" viewBox="0 0 24 24" preserveAspectRatio="none"><circle cx="10" cy="10" r="8.5" fill="#e2e2e2"/><path d="M10 1.5A8.5 8.5 0 0 0 10 18.5A5 8.5 0 0 1 10 1.5Z" fill="#c2c2c2"/><rect x="12" y="13" width="11" height="10.5" rx="1" fill="#f4f4f4" stroke="#b8bcb4" stroke-width="1.5"/><path d="M15.5 16.5H19.5L17.5 21Z" fill="#b8b8b8"/></svg>
<svg class="a" style="left:886px;top:48px" width="12.00" height="12.50" viewBox="0 0 24 24" preserveAspectRatio="none"><path d="M1 2C4 2 6 6 7 10M13 2C10 2 8 6 7 10V22" stroke="#bdbdbd" stroke-width="1.5" fill="none"/><rect x="11" y="13" width="11" height="10.5" rx="1" fill="#f4f4f4" stroke="#b8bcb4" stroke-width="1.5"/><path d="M14.5 21L16.5 16.5L18.5 21Z" fill="#b8b8b8"/></svg>
<svg class="a" style="left:904px;top:48px" width="12.00" height="12.50" viewBox="0 0 24 24" preserveAspectRatio="none"><path d="M1 2C4 2 6 6 7 10M13 2C10 2 8 6 7 10V22" stroke="#bdbdbd" stroke-width="1.5" fill="none"/><rect x="11" y="13" width="11" height="10.5" rx="1" fill="#f4f4f4" stroke="#b8bcb4" stroke-width="1.5"/><path d="M14.5 16.5H18.5L16.5 21Z" fill="#b8b8b8"/></svg>
<svg class="a" style="left:2.5px;top:68.5px" width="4" height="11" viewBox="0 0 4 11"><circle cx="0.8" cy="1.0" r="0.5" fill="#dcdcdc"/><circle cx="2.8" cy="1.0" r="0.5" fill="#dcdcdc"/><circle cx="0.8" cy="3.8" r="0.5" fill="#dcdcdc"/><circle cx="2.8" cy="3.8" r="0.5" fill="#dcdcdc"/><circle cx="0.8" cy="6.6" r="0.5" fill="#dcdcdc"/><circle cx="2.8" cy="6.6" r="0.5" fill="#dcdcdc"/><circle cx="0.8" cy="9.4" r="0.5" fill="#dcdcdc"/><circle cx="2.8" cy="9.4" r="0.5" fill="#dcdcdc"/></svg>
<div class="a pressed" style="left:7px;top:66.5px;width:16.5px;height:16px"></div>
<svg class="a" style="left:9px;top:68px" width="13.00" height="13.00" viewBox="0 0 24 24" preserveAspectRatio="none"><path d="M4.5 13.5L8 17A6 6 0 0 0 16.5 8.5L13 5" stroke="#c8161a" stroke-width="5.5" fill="none" stroke-linecap="butt"/><path d="M4.5 13.5L8 17A6 6 0 0 0 16.5 8.5L13 5" stroke="#e8191c" stroke-width="4" fill="none"/><path d="M3 12L6.5 15.5M11.5 3.5L15 7" stroke="#fff" stroke-width="4"/><path d="M1.5 10.5L7 16M10 2L16.5 8.5" stroke="#d98080" stroke-width="0.7" fill="none"/></svg>
<svg class="a" style="left:28px;top:68px" width="11.50" height="11.50" viewBox="0 0 24 24" preserveAspectRatio="none"><path d="M2 2L9 19L14 7" stroke="#7cc07c" stroke-width="1.8" fill="none"/><path d="M5 9L12 13" stroke="#7cc07c" stroke-width="1.5"/><circle cx="2" cy="2" r="2" fill="#888"/><circle cx="5" cy="9" r="1.8" fill="#999"/><circle cx="9" cy="19" r="2" fill="#888"/><circle cx="14" cy="7" r="1.8" fill="#999"/><path d="M15 4H23M15 12H23" stroke="#888" stroke-width="2.2"/></svg>
<svg class="a" style="left:37.5px;top:79px" width="3.6" height="2" viewBox="0 0 4 2.2"><path d="M0 0H4L2 2.2Z" fill="#5a5a5a"/></svg>
<div class="a pressed" style="left:42px;top:66.5px;width:16.5px;height:16px"></div>
<svg class="a" style="left:45.5px;top:69px" width="10.50" height="11.00" viewBox="0 0 24 24" preserveAspectRatio="none"><circle cx="4" cy="4" r="2" fill="#999" stroke="#777" stroke-width="0.6"/><circle cx="19" cy="6" r="2" fill="#999" stroke="#777" stroke-width="0.6"/><circle cx="10" cy="18" r="2" fill="#999" stroke="#777" stroke-width="0.6"/></svg>
<svg class="a" style="left:54px;top:79.5px" width="3.6" height="2" viewBox="0 0 4 2.2"><path d="M0 0H4L2 2.2Z" fill="#5a5a5a"/></svg>
<div class="a inp" style="left:60px;top:69px;width:36.5px;height:10.8px"></div>
<div class="a" style="left:62.5px;top:70.6px;font-size:6.4px;line-height:7px;color:#222">12</div>
<svg class="a" style="left:84.5px;top:71.5px" width="6.5" height="5" viewBox="0 0 6.5 5"><path d="M2 0.3H6.2V4.7H2L0.2 2.5Z" fill="#8a8a8a"/><path d="M3.2 1.4L5.2 3.6M5.2 1.4L3.2 3.6" stroke="#eee" stroke-width="0.6"/></svg>
<div class="a inp" style="left:96.5px;top:68.8px;width:8px;height:11.2px;border-radius:1.5px"></div>
<svg class="a" style="left:98.5px;top:70.5px" width="4" height="8" viewBox="0 0 4 8"><path d="M0.3 3L2 1L3.7 3Z M0.3 5L2 7L3.7 5Z" fill="#3a3a3a"/></svg>
<div class="a inp" style="left:105.5px;top:69px;width:46px;height:11.5px;border-radius:1.5px"></div>
<div class="a" style="left:107.2px;top:71px;font-size:6.4px;line-height:7px;color:#222">px</div>
<svg class="a" style="left:144px;top:74px" width="3.6" height="2" viewBox="0 0 4 2.2"><path d="M0 0H4L2 2.2Z" fill="#5a5a5a"/></svg>
<svg class="a" style="left:156px;top:68.5px" width="10.50" height="12.00" viewBox="0 0 24 24" preserveAspectRatio="none"><path d="M9 13L3 1.5M9 13L22 8M9 13L10 23" stroke="#78bf78" stroke-width="2"/><circle cx="9" cy="13" r="2.6" fill="#7a7a7a"/></svg>
<svg class="a" style="left:172px;top:68.5px" width="13.00" height="12.00" viewBox="0 0 24 24" preserveAspectRatio="none"><circle cx="16" cy="8" r="6.5" fill="#b8b8b8" stroke="#888" stroke-width="1.2"/><path d="M2 7C2 1 11 0 13 5C15 8 14 12 13 14V19C13 23 6 24 6 19V13C3 12 2 10 2 7Z" fill="#7eb972" stroke="#444" stroke-width="1.4"/><circle cx="6" cy="7" r="1.1" fill="#dde060"/><circle cx="9" cy="5.5" r="1.1" fill="#dde060"/></svg>
<svg class="a" style="left:184px;top:80px" width="3.6" height="2" viewBox="0 0 4 2.2"><path d="M0 0H4L2 2.2Z" fill="#5a5a5a"/></svg>
<svg class="a" style="left:190px;top:68.5px" width="12.50" height="12.00" viewBox="0 0 24 24" preserveAspectRatio="none"><path d="M1.5 1.5L22.5 22.5M22.5 1.5L1.5 22.5" stroke="#78bf78" stroke-width="2"/><circle cx="12" cy="12" r="2.5" fill="#7a7a7a"/></svg>
<svg class="a" style="left:208px;top:68.5px" width="11.50" height="12.00" viewBox="0 0 24 24" preserveAspectRatio="none"><path d="M1 23L23 1" stroke="#78bf78" stroke-width="2"/><path d="M2 3L8 10L14 6L15 13L21 11L18 22L13 15L8 17L5 11Z" fill="#f0d020" stroke="#caa820" stroke-width="0.6"/></svg>
<svg class="a" style="left:223.5px;top:73.5px" width="3.6" height="2" viewBox="0 0 4 2.2"><path d="M0 0H4L2 2.2Z" fill="#5a5a5a"/></svg>
<svg class="a" style="left:232px;top:68.5px" width="12.00" height="12.00" viewBox="0 0 24 24" preserveAspectRatio="none"><path d="M1 22L9 18L5 5L20 16" stroke="#78bf78" stroke-width="1.6" fill="none"/><circle cx="9" cy="18" r="2.4" fill="#888"/><circle cx="5" cy="5" r="2.4" fill="#888"/><path d="M14 8L20 1L24 5L18 12Z" fill="#f0d53c" stroke="#c8a828" stroke-width="0.8"/></svg>
<svg class="a" style="left:253.0px;top:68.5px" width="4" height="11" viewBox="0 0 4 11"><circle cx="0.8" cy="1.0" r="0.5" fill="#dcdcdc"/><circle cx="2.8" cy="1.0" r="0.5" fill="#dcdcdc"/><circle cx="0.8" cy="3.8" r="0.5" fill="#dcdcdc"/><circle cx="2.8" cy="3.8" r="0.5" fill="#dcdcdc"/><circle cx="0.8" cy="6.6" r="0.5" fill="#dcdcdc"/><circle cx="2.8" cy="6.6" r="0.5" fill="#dcdcdc"/><circle cx="0.8" cy="9.4" r="0.5" fill="#dcdcdc"/><circle cx="2.8" cy="9.4" r="0.5" fill="#dcdcdc"/></svg>
<svg class="a" style="left:258.5px;top:68.9px" width="11.90" height="11.10" viewBox="0 0 24 24" preserveAspectRatio="none"><path d="M11.5 0.5C6 0.5 6.5 3 6.5 5V8H12.5V9H3.5C0.5 9 0.5 12 0.5 14.5C0.5 18 2.5 18.5 4.5 18.5H6.5V15.5C6.5 13 8.5 12 10.5 12H15C17 12 18.5 11 18.5 9V5C18.5 2 16.5 0.5 11.5 0.5Z" fill="#3a72b0"/><circle cx="9" cy="3.5" r="1" fill="#fff"/><path d="M12 23.5C17.5 23.5 17 21 17 19V16H11V15H20C23 15 23 12 23 9.5C23 6 21 5.5 19 5.5H17V8.5C17 11 15 12 13 12H8.5C6.5 12 5 13 5 15V19C5 22 7 23.5 12 23.5Z" fill="#f3cf40"/><path d="M16 18L21 21L16 24" stroke="#444" stroke-width="1.4" fill="none"/></svg>
<svg class="a" style="left:275.4px;top:68.5px" width="13.10" height="12.50" viewBox="0 0 24 24" preserveAspectRatio="none"><rect x="0" y="0" width="24" height="24" fill="#e6261c"/><path d="M0 0H9L5 9L11 14L3 24H0Z" fill="#f7ec1c"/><path d="M12 0H24V9L17 6Z" fill="#f7ec1c"/><path d="M11 14L18 9L24 15V24H13Z" fill="#f7ec1c"/><path d="M9 11L14 4L17 10Z" fill="#2e982e"/><path d="M18 2L24 0V7Z" fill="#2e982e"/><path d="M2 16L7 20L3 24Z" fill="#2e982e"/><rect x="19" y="21" width="5" height="3" fill="#8040c0"/></svg>
<svg class="a" style="left:292.9px;top:68.5px" width="13.10" height="12.50" viewBox="0 0 24 24" preserveAspectRatio="none"><rect x="0.5" y="0.5" width="23" height="23" fill="#a8c4e0" stroke="#7896b8" stroke-width="1"/><rect x="2.5" y="2.5" width="8.5" height="19" fill="#d4e6f8"/><rect x="13" y="2.5" width="8.5" height="19" fill="#b4d89a"/><path d="M13 2.5L21.5 6V13L13 9Z" fill="#d8e8b0"/><path d="M16 14L21.5 18V21.5H15Z" fill="#8cc0e0"/><path d="M7 12L11 9.5V14.5Z M17 12L13 9.5V14.5Z" fill="#1a1a1a"/></svg>
<svg class="a" style="left:314.0px;top:68.5px" width="4" height="11" viewBox="0 0 4 11"><circle cx="0.8" cy="1.0" r="0.5" fill="#dcdcdc"/><circle cx="2.8" cy="1.0" r="0.5" fill="#dcdcdc"/><circle cx="0.8" cy="3.8" r="0.5" fill="#dcdcdc"/><circle cx="2.8" cy="3.8" r="0.5" fill="#dcdcdc"/><circle cx="0.8" cy="6.6" r="0.5" fill="#dcdcdc"/><circle cx="2.8" cy="6.6" r="0.5" fill="#dcdcdc"/><circle cx="0.8" cy="9.4" r="0.5" fill="#dcdcdc"/><circle cx="2.8" cy="9.4" r="0.5" fill="#dcdcdc"/></svg>
<svg class="a" style="left:319.75px;top:69px" width="12.50" height="11.50" viewBox="0 0 24 24" preserveAspectRatio="none"><rect x="1" y="1" width="17" height="9" fill="none" stroke="#a8a8a8" stroke-width="0.9"/><path d="M12 8V17L10 15C9 14 8 15 9 16L12.5 22H20L21 16L15 14V8C15 7 12 7 12 8Z" fill="#fff" stroke="#6a6a6a" stroke-width="1"/></svg>
<svg class="a" style="left:339.0px;top:68.5px" width="4" height="11" viewBox="0 0 4 11"><circle cx="0.8" cy="1.0" r="0.5" fill="#dcdcdc"/><circle cx="2.8" cy="1.0" r="0.5" fill="#dcdcdc"/><circle cx="0.8" cy="3.8" r="0.5" fill="#dcdcdc"/><circle cx="2.8" cy="3.8" r="0.5" fill="#dcdcdc"/><circle cx="0.8" cy="6.6" r="0.5" fill="#dcdcdc"/><circle cx="2.8" cy="6.6" r="0.5" fill="#dcdcdc"/><circle cx="0.8" cy="9.4" r="0.5" fill="#dcdcdc"/><circle cx="2.8" cy="9.4" r="0.5" fill="#dcdcdc"/></svg>
<svg class="a" style="left:345.4px;top:68.8px" width="12.50" height="11.70" viewBox="0 0 24 24" preserveAspectRatio="none"><path d="M12 0.5L23.5 8.5L19.5 23H4.5L0.5 8.5Z" fill="#28a03a"/><path d="M12 4L20 9.8L17 19.5H7L4 9.8Z" fill="#a8d890"/><path d="M12 7.5L16.5 11L15 16H9L7.5 11Z" fill="#d8c8b0"/><circle cx="12" cy="12" r="1.6" fill="#f090c0"/></svg>
<svg class="a" style="left:367.0px;top:68.5px" width="4" height="11" viewBox="0 0 4 11"><circle cx="0.8" cy="1.0" r="0.5" fill="#dcdcdc"/><circle cx="2.8" cy="1.0" r="0.5" fill="#dcdcdc"/><circle cx="0.8" cy="3.8" r="0.5" fill="#dcdcdc"/><circle cx="2.8" cy="3.8" r="0.5" fill="#dcdcdc"/><circle cx="0.8" cy="6.6" r="0.5" fill="#dcdcdc"/><circle cx="2.8" cy="6.6" r="0.5" fill="#dcdcdc"/><circle cx="0.8" cy="9.4" r="0.5" fill="#dcdcdc"/><circle cx="2.8" cy="9.4" r="0.5" fill="#dcdcdc"/></svg>
<svg class="a" style="left:372.75px;top:69px" width="11.75" height="12.00" viewBox="0 0 24 24" preserveAspectRatio="none"><path d="M12 0.5L23 20H1Z" fill="#78b83a"/><path d="M12 8L17 17H7Z" fill="#fff"/><path d="M12 3L5 16M12 3L19 16" stroke="#9ad060" stroke-width="0.8"/><path d="M1 22.5H23" stroke="#e8304a" stroke-width="2.6" stroke-dasharray="2.5 1.5"/><path d="M1 20.3H23" stroke="#f0d040" stroke-width="1.4"/></svg>
<svg class="a" style="left:389px;top:68px" width="13.75" height="12.50" viewBox="0 0 24 24" preserveAspectRatio="none"><circle cx="11.5" cy="11.5" r="11" fill="#86b2e0" stroke="#5a88c0" stroke-width="0.8"/><path d="M11.5 1V22M1 11.5H22" stroke="#eef4fa" stroke-width="1.3" fill="none"/><ellipse cx="11.5" cy="11.5" rx="5.5" ry="10.5" fill="none" stroke="#eef4fa" stroke-width="1.3"/><path d="M6 4V19M17 4V19" stroke="#5a6a80" stroke-width="1.2" stroke-dasharray="1.5 1.5"/><rect x="13" y="13" width="11" height="11" rx="1.5" fill="#3a9a48"/><path d="M18.5 15V22M15 18.5H22" stroke="#fff" stroke-width="2.2"/></svg>
<svg class="a" style="left:406.5px;top:68px" width="13.75" height="12.50" viewBox="0 0 24 24" preserveAspectRatio="none"><circle cx="11.5" cy="11.5" r="11" fill="#86b2e0" stroke="#5a88c0" stroke-width="0.8"/><path d="M11.5 1V22M1 11.5H22" stroke="#eef4fa" stroke-width="1.3" fill="none"/><ellipse cx="11.5" cy="11.5" rx="5.5" ry="10.5" fill="none" stroke="#eef4fa" stroke-width="1.3"/><path d="M6 4V19M17 4V19" stroke="#5a6a80" stroke-width="1.2" stroke-dasharray="1.5 1.5"/><rect x="13" y="13" width="11" height="11" rx="1.5" fill="#3a9a48"/><rect x="15.5" y="15.5" width="6" height="6" fill="none" stroke="#fff" stroke-width="1.5"/></svg>
<svg class="a" style="left:424px;top:68px" width="13.75" height="12.50" viewBox="0 0 24 24" preserveAspectRatio="none"><circle cx="11.5" cy="11.5" r="11" fill="#4a78b0" stroke="#5a88c0" stroke-width="0.8"/><path d="M11.5 1V22M1 11.5H22" stroke="#eef4fa" stroke-width="1.3" fill="none"/><ellipse cx="11.5" cy="11.5" rx="5.5" ry="10.5" fill="none" stroke="#eef4fa" stroke-width="1.3"/><path d="M6 4V19M17 4V19" stroke="#5a6a80" stroke-width="1.2" stroke-dasharray="1.5 1.5"/><path d="M1 19C1 15 5 14 8 16H16C19 14 23 15 23 19C23 23.5 17 24 16 20.5H8C7 24 1 23.5 1 19Z" fill="#111"/><circle cx="5" cy="19.5" r="2.2" fill="#fff"/><circle cx="19" cy="19.5" r="2.2" fill="#fff"/><path d="M8 5L14 9" stroke="#fff"/></svg>
<svg class="a" style="left:446.0px;top:68.5px" width="4" height="11" viewBox="0 0 4 11"><circle cx="0.8" cy="1.0" r="0.5" fill="#dcdcdc"/><circle cx="2.8" cy="1.0" r="0.5" fill="#dcdcdc"/><circle cx="0.8" cy="3.8" r="0.5" fill="#dcdcdc"/><circle cx="2.8" cy="3.8" r="0.5" fill="#dcdcdc"/><circle cx="0.8" cy="6.6" r="0.5" fill="#dcdcdc"/><circle cx="2.8" cy="6.6" r="0.5" fill="#dcdcdc"/><circle cx="0.8" cy="9.4" r="0.5" fill="#dcdcdc"/><circle cx="2.8" cy="9.4" r="0.5" fill="#dcdcdc"/></svg>
<svg class="a" style="left:450.9px;top:68.5px" width="13.10" height="11.50" viewBox="0 0 24 24" preserveAspectRatio="none"><path d="M2 0.5V5H6M2 5V9H5M2 13V17.5H6M2 17.5V23" stroke="#222" stroke-width="1.8" fill="none"/><path d="M8 5H23M8 18H23" stroke="#333" stroke-width="2.2" stroke-dasharray="2 1"/><circle cx="12" cy="11.5" r="2" fill="#f0d040"/></svg>
<svg class="a" style="left:471.0px;top:68.5px" width="4" height="11" viewBox="0 0 4 11"><circle cx="0.8" cy="1.0" r="0.5" fill="#dcdcdc"/><circle cx="2.8" cy="1.0" r="0.5" fill="#dcdcdc"/><circle cx="0.8" cy="3.8" r="0.5" fill="#dcdcdc"/><circle cx="2.8" cy="3.8" r="0.5" fill="#dcdcdc"/><circle cx="0.8" cy="6.6" r="0.5" fill="#dcdcdc"/><circle cx="2.8" cy="6.6" r="0.5" fill="#dcdcdc"/><circle cx="0.8" cy="9.4" r="0.5" fill="#dcdcdc"/><circle cx="2.8" cy="9.4" r="0.5" fill="#dcdcdc"/></svg>
<svg class="a" style="left:477px;top:68px" width="12.00" height="12.50" viewBox="0 0 24 24" preserveAspectRatio="none"><rect x="1" y="1" width="21" height="21" fill="#f4f4f4" stroke="#d0d0d0" stroke-width="1"/><path d="M1 8H22M1 15H22M8 1V22M15 1V22" stroke="#d8d8d8" stroke-width="0.8"/><path d="M5 22L22 2" stroke="#c4c4c4" stroke-width="2.2"/><path d="M9 22L23 6" stroke="#e4e4e4" stroke-width="1"/></svg>
<svg class="a" style="left:494.5px;top:68px" width="12.50" height="12.50" viewBox="0 0 24 24" preserveAspectRatio="none"><rect x="1" y="1" width="21" height="18" fill="#e8e4dc" stroke="#d2cec6" stroke-width="1"/><path d="M1 7H22M1 13H22M8 1V19M15 1V19" stroke="#dcdcdc" stroke-width="0.8"/><path d="M10 8L21 17H16L19 22L17 23L14 18L10 21Z" fill="#fafafa" stroke="#b8b8b8" stroke-width="1"/></svg>
<svg class="a" style="left:511px;top:73.5px" width="3.6" height="2" viewBox="0 0 4 2.2"><path d="M0 0H4L2 2.2Z" fill="#5a5a5a"/></svg>
<svg class="a" style="left:518.9px;top:68px" width="11.85" height="12.50" viewBox="0 0 24 24" preserveAspectRatio="none"><rect x="1" y="1" width="5" height="5" fill="none" stroke="#c8c8c8"/><rect x="8" y="1" width="5" height="5" fill="none" stroke="#c8c8c8"/><rect x="1" y="8" width="5" height="5" fill="none" stroke="#c8c8c8"/><circle cx="18" cy="4" r="2.5" fill="none" stroke="#c4c4c4"/><circle cx="4" cy="19" r="3" fill="none" stroke="#c4c4c4"/><circle cx="11" cy="19" r="3" fill="none" stroke="#c4c4c4"/><path d="M22 11C17 9 14 12 15 15C16 18 21 18 22 22" stroke="#c4c4c4" stroke-width="1.2" fill="none"/></svg>
<svg class="a" style="left:536.4px;top:68px" width="11.85" height="12.50" viewBox="0 0 24 24" preserveAspectRatio="none"><rect x="1" y="1" width="22" height="22" fill="#f2f2f2" stroke="#d6d6d6" stroke-width="1.2"/><path d="M2 2L12 22L22 2" stroke="#d4cec4" stroke-width="1.2" fill="none"/></svg>
<svg class="a" style="left:553.5px;top:73.5px" width="3.6" height="2" viewBox="0 0 4 2.2"><path d="M0 0H4L2 2.2Z" fill="#5a5a5a"/></svg>
<svg class="a" style="left:563.0px;top:68.5px" width="4" height="11" viewBox="0 0 4 11"><circle cx="0.8" cy="1.0" r="0.5" fill="#dcdcdc"/><circle cx="2.8" cy="1.0" r="0.5" fill="#dcdcdc"/><circle cx="0.8" cy="3.8" r="0.5" fill="#dcdcdc"/><circle cx="2.8" cy="3.8" r="0.5" fill="#dcdcdc"/><circle cx="0.8" cy="6.6" r="0.5" fill="#dcdcdc"/><circle cx="2.8" cy="6.6" r="0.5" fill="#dcdcdc"/><circle cx="0.8" cy="9.4" r="0.5" fill="#dcdcdc"/><circle cx="2.8" cy="9.4" r="0.5" fill="#dcdcdc"/></svg>
<svg class="a" style="left:568.9px;top:68px" width="12.50" height="13.00" viewBox="0 0 24 24" preserveAspectRatio="none"><path d="M0.5 1.5H13" stroke="#4a7fbf" stroke-width="2"/><path d="M0.5 21L6.5 5H10.5L16.5 21H12.5L11.3 17.5H5.7L4.5 21Z M6.8 14H10.2L8.5 9Z" fill="#2c6cb4"/><circle cx="19.5" cy="3.5" r="2.6" fill="#4a84c4"/><path d="M14 6L17 4" stroke="#4a84c4"/><rect x="13" y="12.5" width="11" height="11.5" rx="1.5" fill="#dcb52c"/><circle cx="18.5" cy="18.2" r="2.8" fill="none" stroke="#fff" stroke-width="1.5"/></svg>
<svg class="a" style="left:586px;top:73.5px" width="3.6" height="2" viewBox="0 0 4 2.2"><path d="M0 0H4L2 2.2Z" fill="#5a5a5a"/></svg>
<svg class="a" style="left:593px;top:68px" width="11.00" height="12.50" viewBox="0 0 24 24" preserveAspectRatio="none"><rect x="1" y="1" width="21" height="21" fill="none" stroke="#999" stroke-width="0.9" stroke-dasharray="1.5 2.5"/><path d="M5 2L21 17H14.5L18 23L15.5 24L12 18L6 22Z" fill="#fff" stroke="#333" stroke-width="1.3"/></svg>
<svg class="a" style="left:610px;top:68px" width="13.00" height="12.50" viewBox="0 0 24 24" preserveAspectRatio="none"><path d="M2 2H17L9 20L2 13Z" fill="none" stroke="#777" stroke-width="1.6"/><circle cx="2.5" cy="2.5" r="2.5" fill="#3a7ce8"/><circle cx="17" cy="2" r="2.5" fill="#3a7ce8"/><circle cx="9" cy="20" r="2.5" fill="#3a7ce8"/><circle cx="2.5" cy="13" r="2.5" fill="#3a7ce8"/><rect x="13" y="13" width="11" height="11" rx="1.5" fill="#3c9a4a"/><path d="M18.5 15V22M15 18.5H22" stroke="#fff" stroke-width="2.2"/></svg>
<svg class="a" style="left:627.5px;top:68px" width="13.10" height="12.50" viewBox="0 0 24 24" preserveAspectRatio="none"><path d="M17 3H6L2 11L7 20" fill="none" stroke="#777" stroke-width="1.6"/><circle cx="6" cy="3" r="2.5" fill="#3a7ce8"/><circle cx="17" cy="3" r="2.5" fill="#3a7ce8"/><circle cx="2.5" cy="11" r="2.5" fill="#3a7ce8"/><circle cx="7" cy="20" r="2.5" fill="#3a7ce8"/><rect x="13" y="13" width="11" height="11" rx="1.5" fill="#3c9a4a"/><path d="M18.5 15V22M15 18.5H22" stroke="#fff" stroke-width="2.2"/></svg>
<svg class="a" style="left:646px;top:68px" width="12.50" height="12.50" viewBox="0 0 24 24" preserveAspectRatio="none"><path d="M10 1L13 7.5L20 8.5L15 13.5L16.5 20.5L10 17L3.5 20.5L5 13.5L0 8.5L7 7.5Z" fill="#f4e392" stroke="#dcc868" stroke-width="1"/><rect x="13" y="13" width="11" height="11" rx="1.5" fill="#3c9a4a"/><path d="M18.5 15V22M15 18.5H22" stroke="#fff" stroke-width="2.2"/></svg>
<svg class="a" style="left:664.4px;top:68px" width="12.10" height="12.50" viewBox="0 0 24 24" preserveAspectRatio="none"><path d="M5 3H19V6.5H18L17.5 5H13.5V17H15.5V18.5H9V17H11V5H7L6.5 6.5H5Z" fill="#2a2a2a"/><circle cx="2" cy="19" r="1.4" fill="#777"/><rect x="13" y="13" width="11" height="11" rx="1.5" fill="#3c9a4a"/><path d="M18.5 15V22M15 18.5H22" stroke="#fff" stroke-width="2.2"/></svg>
<div class="a" style="left:680.5px;top:69px;width:0.8px;height:12px;background:#d8d8d8"></div>
<svg class="a" style="left:684.4px;top:68px" width="12.60" height="13.00" viewBox="0 0 24 24" preserveAspectRatio="none"><path d="M1 1H23V17H8L4 22V17H1Z" fill="#e8f0f8" stroke="#a0a0a0" stroke-width="1"/><path d="M6 3.5H18V7H17L16.5 5.5H13.3V14H15V15.5H9V14H10.7V5.5H7.5L7 7H6Z" fill="#333"/></svg>
<svg class="a" style="left:701px;top:73.5px" width="3.6" height="2" viewBox="0 0 4 2.2"><path d="M0 0H4L2 2.2Z" fill="#5a5a5a"/></svg>
<svg class="a" style="left:711.0px;top:68.5px" width="4" height="11" viewBox="0 0 4 11"><circle cx="0.8" cy="1.0" r="0.5" fill="#dcdcdc"/><circle cx="2.8" cy="1.0" r="0.5" fill="#dcdcdc"/><circle cx="0.8" cy="3.8" r="0.5" fill="#dcdcdc"/><circle cx="2.8" cy="3.8" r="0.5" fill="#dcdcdc"/><circle cx="0.8" cy="6.6" r="0.5" fill="#dcdcdc"/><circle cx="2.8" cy="6.6" r="0.5" fill="#dcdcdc"/><circle cx="0.8" cy="9.4" r="0.5" fill="#dcdcdc"/><circle cx="2.8" cy="9.4" r="0.5" fill="#dcdcdc"/></svg>
<svg class="a" style="left:716.6px;top:68px" width="13.20" height="13.10" viewBox="0 0 24 24" preserveAspectRatio="none"><rect x="0" y="0" width="24" height="24" fill="#0a0a0a"/><path d="M1 9L9 2L22 5M3 23L8 11L21 14M9 2L8 11M14 12L17 23M2 15L9 19M12 6L23 9M4 5L8 11" stroke="#f4f4f4" stroke-width="1.6" fill="none"/></svg>
<svg class="a" style="left:734.3px;top:68px" width="13.00" height="13.10" viewBox="0 0 24 24" preserveAspectRatio="none"><rect x="0" y="0" width="24" height="24" fill="#0a0a0a"/><path d="M2 2L15 23" stroke="#e84a28" stroke-width="1.5"/><path d="M1 11L23 5M8 13L23 17M9 3L14 11M16 6L21 12" stroke="#6cbf2a" stroke-width="1.8"/><path d="M17 21L23 23" stroke="#4a8ad0" stroke-width="2"/><path d="M6 5L11 2" stroke="#f0d030" stroke-width="1.2"/></svg>
<svg class="a" style="left:752.2px;top:68px" width="12.80" height="13.10" viewBox="0 0 24 24" preserveAspectRatio="none"><rect x="0" y="0" width="24" height="24" fill="#3c3e40"/><circle cx="5" cy="6" r="0.9" fill="#b8b040"/><circle cx="9" cy="3.5" r="0.9" fill="#b8b040"/><circle cx="13" cy="6" r="0.9" fill="#b8b040"/><circle cx="17" cy="4" r="0.9" fill="#b8b040"/><circle cx="20" cy="7" r="0.9" fill="#b8b040"/><circle cx="8" cy="9" r="0.9" fill="#b8b040"/><circle cx="15" cy="9" r="0.9" fill="#b8b040"/><text x="9" y="22.5" font-size="12" font-family="Liberation Sans" fill="#d8d8d8">Dr</text></svg>
<svg class="a" style="left:770px;top:68px" width="12.90" height="13.10" viewBox="0 0 24 24" preserveAspectRatio="none"><rect x="0" y="0" width="24" height="24" fill="#0a24f8"/><text x="9" y="22.5" font-size="12" font-family="Liberation Sans" fill="#fff">Cl</text></svg>
<svg class="a" style="left:787.5px;top:68px" width="12.90" height="13.10" viewBox="0 0 24 24" preserveAspectRatio="none"><rect x="0" y="0" width="24" height="24" fill="#20e0f4"/><text x="9" y="22.5" font-size="12" font-family="Liberation Sans" fill="#e8fcff">Sg</text></svg>
<svg class="a" style="left:805px;top:68px" width="12.90" height="13.10" viewBox="0 0 24 24" preserveAspectRatio="none"><rect x="0" y="0" width="24" height="24" fill="#f8c808"/><text x="9" y="22.5" font-size="12" font-family="Liberation Sans" fill="#fff4c8">Ca</text></svg>
<svg class="a" style="left:822.5px;top:68px" width="13.00" height="13.10" viewBox="0 0 24 24" preserveAspectRatio="none"><rect x="0" y="0" width="24" height="24" fill="#f81010"/><text x="9" y="22.5" font-size="12" font-family="Liberation Sans" fill="#fff">In</text></svg>
<svg class="a" style="left:840.4px;top:68px" width="12.60" height="13.10" viewBox="0 0 24 24" preserveAspectRatio="none"><rect x="0" y="0" width="24" height="24" fill="#f8f410"/><text x="9" y="22.5" font-size="12" font-family="Liberation Sans" fill="#a0a040">Tr</text></svg>
<svg class="a" style="left:860.0px;top:68.5px" width="4" height="11" viewBox="0 0 4 11"><circle cx="0.8" cy="1.0" r="0.5" fill="#dcdcdc"/><circle cx="2.8" cy="1.0" r="0.5" fill="#dcdcdc"/><circle cx="0.8" cy="3.8" r="0.5" fill="#dcdcdc"/><circle cx="2.8" cy="3.8" r="0.5" fill="#dcdcdc"/><circle cx="0.8" cy="6.6" r="0.5" fill="#dcdcdc"/><circle cx="2.8" cy="6.6" r="0.5" fill="#dcdcdc"/><circle cx="0.8" cy="9.4" r="0.5" fill="#dcdcdc"/><circle cx="2.8" cy="9.4" r="0.5" fill="#dcdcdc"/></svg>
<svg class="a" style="left:868.5px;top:68.5px" width="4" height="11" viewBox="0 0 4 11"><circle cx="0.8" cy="1.0" r="0.5" fill="#dcdcdc"/><circle cx="2.8" cy="1.0" r="0.5" fill="#dcdcdc"/><circle cx="0.8" cy="3.8" r="0.5" fill="#dcdcdc"/><circle cx="2.8" cy="3.8" r="0.5" fill="#dcdcdc"/><circle cx="0.8" cy="6.6" r="0.5" fill="#dcdcdc"/><circle cx="2.8" cy="6.6" r="0.5" fill="#dcdcdc"/><circle cx="0.8" cy="9.4" r="0.5" fill="#dcdcdc"/><circle cx="2.8" cy="9.4" r="0.5" fill="#dcdcdc"/></svg>
<svg class="a" style="left:876px;top:68.5px" width="11.30" height="11.50" viewBox="0 0 24 24" preserveAspectRatio="none"><circle cx="12" cy="12" r="11.5" fill="#3aa444"/><circle cx="16" cy="6.5" r="2.4" fill="#fff"/><circle cx="7" cy="12" r="2.4" fill="#fff"/><circle cx="16" cy="17.5" r="2.4" fill="#fff"/><path d="M16 6.5L7 12L16 17.5" stroke="#fff" stroke-width="1.5" fill="none"/></svg>
<svg class="a" style="left:4.5px;top:94px" width="13.00" height="13.00" viewBox="0 0 24 24" preserveAspectRatio="none"><path d="M1 3L7.5 21L14 3" stroke="#4a5260" stroke-width="2" fill="none"/><path d="M14.5 5H19" stroke="#555" stroke-width="1.6"/><circle cx="21" cy="4" r="1.6" fill="none" stroke="#555" stroke-width="1"/><rect x="14" y="14" width="10" height="10" rx="2" fill="#4aa04e" stroke="#fff" stroke-width="0.8"/><path d="M19 16.5V21.5M16.5 19H21.5" stroke="#fff" stroke-width="2"/></svg>
<svg class="a" style="left:4.5px;top:111px" width="13.00" height="13.00" viewBox="0 0 24 24" preserveAspectRatio="none"><rect x="1" y="1" width="18" height="18" fill="#4a84c8"/><rect x="1" y="1" width="6" height="6" fill="#1a1a1a"/><rect x="13" y="1" width="6" height="6" fill="#1a1a1a"/><rect x="7" y="7" width="6" height="6" fill="#1a1a1a"/><rect x="1" y="13" width="6" height="6" fill="#1a1a1a"/><rect x="7" y="1" width="6" height="6" fill="#6aa0dc"/><rect x="14" y="14" width="10" height="10" rx="2" fill="#4aa04e" stroke="#fff" stroke-width="0.8"/><path d="M19 16.5V21.5M16.5 19H21.5" stroke="#fff" stroke-width="2"/></svg>
<svg class="a" style="left:4.5px;top:128px" width="13.00" height="13.00" viewBox="0 0 24 24" preserveAspectRatio="none"><rect x="1" y="1" width="19" height="19" fill="#3a6ca8"/><path d="M1 7.5H20M1 14H20M7.5 1V20M14 1V20" stroke="#a8c4e4" stroke-width="1"/><path d="M3 6L6 3M9 6L13 2M15 6L19 2" stroke="#fff" stroke-width="1"/><rect x="14" y="14" width="10" height="10" rx="2" fill="#4aa04e" stroke="#fff" stroke-width="0.8"/><path d="M19 16.5V21.5M16.5 19H21.5" stroke="#fff" stroke-width="2"/></svg>
<svg class="a" style="left:5.5px;top:145.6px" width="12.00" height="12.40" viewBox="0 0 24 24" preserveAspectRatio="none"><path d="M6 2C10 0 14 3 12 8C10 13 5 17 2 19C4 16 6 13 6 11C3 11 1 9 1 6C1 3 3 2 6 2Z" fill="#3a6aa8"/><rect x="14" y="14" width="10" height="10" rx="2" fill="#4aa04e" stroke="#fff" stroke-width="0.8"/><path d="M19 16.5V21.5M16.5 19H21.5" stroke="#fff" stroke-width="2"/></svg>
<svg class="a" style="left:4px;top:161.9px" width="13.50" height="13.10" viewBox="0 0 24 24" preserveAspectRatio="none"><path d="M1 23C3 14 9 4 22 1C21 10 15 19 6 20Z" fill="#4a80c4"/><path d="M1 23L15 8" stroke="#c8dcf0" stroke-width="0.8"/><rect x="14" y="14" width="10" height="10" rx="2" fill="#4aa04e" stroke="#fff" stroke-width="0.8"/><path d="M19 16.5V21.5M16.5 19H21.5" stroke="#fff" stroke-width="2"/></svg>
<svg class="a" style="left:4.5px;top:179.4px" width="13.00" height="12.60" viewBox="0 0 24 24" preserveAspectRatio="none"><rect x="1" y="1" width="18" height="19" rx="1" fill="#b4cce8" stroke="#6a90c0" stroke-width="1"/><path d="M4 4L10 17L16 4" stroke="#3a5a88" stroke-width="1.6" fill="none"/><path d="M2 10H18" stroke="#e0ecf8" stroke-width="1"/><rect x="14" y="14" width="10" height="10" rx="2" fill="#4aa04e" stroke="#fff" stroke-width="0.8"/><path d="M19 16.5V21.5M16.5 19H21.5" stroke="#fff" stroke-width="2"/></svg>
<svg class="a" style="left:4.5px;top:196.2px" width="13.00" height="13.00" viewBox="0 0 24 24" preserveAspectRatio="none"><path d="M2 7C2 1 12 1 14 3C17 1 21 4 20 8C20 12 17 12 16 14V20C16 22 12 22 12 20V16C11 18 8 18 8 16V13C3 13 2 10 2 7Z" fill="#2e64a4"/><path d="M6 6L9 9M11 5V10" stroke="#8ab0dc" stroke-width="1"/><rect x="14" y="14" width="10" height="10" rx="2" fill="#4aa04e" stroke="#fff" stroke-width="0.8"/><path d="M19 16.5V21.5M16.5 19H21.5" stroke="#fff" stroke-width="2"/></svg>
<svg class="a" style="left:20.8px;top:202.5px" width="3.6" height="2" viewBox="0 0 4 2.2"><path d="M0 0H4L2 2.2Z" fill="#5a5a5a"/></svg>
<svg class="a" style="left:4.5px;top:213px" width="13.00" height="13.00" viewBox="0 0 24 24" preserveAspectRatio="none"><circle cx="10.5" cy="10.5" r="10" fill="#7eaee0" stroke="#4a78b8" stroke-width="0.8"/><path d="M1 10.5H20M10.5 1V20M3 5C7 8 14 8 18 5M3 16C7 13 14 13 18 16" stroke="#dce8f6" stroke-width="1.2" fill="none"/><ellipse cx="10.5" cy="10.5" rx="4.5" ry="9.5" fill="none" stroke="#dce8f6" stroke-width="1.2"/><rect x="14" y="14" width="10" height="10" rx="2" fill="#4aa04e" stroke="#fff" stroke-width="0.8"/><path d="M19 16.5V21.5M16.5 19H21.5" stroke="#fff" stroke-width="2"/></svg>
<svg class="a" style="left:4.5px;top:229.9px" width="13.00" height="12.60" viewBox="0 0 24 24" preserveAspectRatio="none"><circle cx="10.5" cy="10.5" r="10" fill="#3a68a8" stroke="#4a78b8" stroke-width="0.8"/><path d="M1 10.5H20M10.5 1V20M3 5C7 8 14 8 18 5M3 16C7 13 14 13 18 16" stroke="#dce8f6" stroke-width="1.2" fill="none"/><ellipse cx="10.5" cy="10.5" rx="4.5" ry="9.5" fill="none" stroke="#dce8f6" stroke-width="1.2"/><rect x="14" y="14" width="10" height="10" rx="2" fill="#4aa04e" stroke="#fff" stroke-width="0.8"/><path d="M19 16.5V21.5M16.5 19H21.5" stroke="#fff" stroke-width="2"/></svg>
<svg class="a" style="left:4.5px;top:246.7px" width="13.00" height="12.80" viewBox="0 0 24 24" preserveAspectRatio="none"><circle cx="10.5" cy="10.5" r="10" fill="#7eaee0" stroke="#4a78b8" stroke-width="0.8"/><path d="M1 10.5H20M10.5 1V20" stroke="#dce8f6" stroke-width="1"/><path d="M4 4L10 17L16 4" stroke="#2a4a78" stroke-width="1.8" fill="none"/><rect x="14" y="14" width="10" height="10" rx="2" fill="#4aa04e" stroke="#fff" stroke-width="0.8"/><path d="M19 16.5V21.5M16.5 19H21.5" stroke="#fff" stroke-width="2"/></svg>
<svg class="a" style="left:4.5px;top:264.2px" width="13.00" height="13.30" viewBox="0 0 24 24" preserveAspectRatio="none"><path d="M1 3L7.5 21L14 3" stroke="#4a5260" stroke-width="2" fill="none"/><path d="M14.5 5H19" stroke="#555" stroke-width="1.6"/><circle cx="21" cy="4" r="1.6" fill="none" stroke="#555" stroke-width="1"/><rect x="14" y="14" width="10" height="10" rx="2" fill="#e0bc28" stroke="#fff" stroke-width="0.8"/><rect x="17" y="17" width="4" height="4" fill="#fff6c0"/></svg>
<svg class="a" style="left:20.8px;top:270.5px" width="3.6" height="2" viewBox="0 0 4 2.2"><path d="M0 0H4L2 2.2Z" fill="#5a5a5a"/></svg>
<div class="a" style="left:9px;top:284.6px;width:10px;height:0.8px;background:#dadada"></div>
<svg class="a" style="left:7.5px;top:290.6px" width="12.50" height="12.60" viewBox="0 0 24 24" preserveAspectRatio="none"><rect x="9" y="2" width="13" height="13" fill="#4a84c4" transform="rotate(12 15 8)"/><path d="M1 9L10 5L13 19L4 22Z" fill="#e86028"/><path d="M4 7L13 5L15 19L6 21Z" fill="#f0c030"/><rect x="9" y="2" width="12" height="12" fill="#5a94d4" transform="rotate(12 15 8)"/><circle cx="19" cy="19" r="4.5" fill="none" stroke="#4aa04e" stroke-width="2.5"/></svg>
<svg class="a" style="left:7px;top:306.9px" width="13.50" height="13.10" viewBox="0 0 24 24" preserveAspectRatio="none"><path d="M1 11L11 7L23 11V21L13 24L1 21Z" fill="#e8c020"/><path d="M1 11L13 14L23 11" stroke="#a08010" stroke-width="1" fill="none"/><path d="M13 14V24" stroke="#c0a018" stroke-width="1"/><path d="M3 10C5 2 17 1 21 9L13 12Z" fill="#4a7cc0"/><path d="M8 6L15 9" stroke="#c8dcf0" stroke-width="1"/><rect x="14" y="14" width="10" height="10" rx="2" fill="#e0bc28" stroke="#fff" stroke-width="0.8"/><rect x="17" y="17" width="4" height="4" fill="#fff6c0"/></svg>
<svg class="a" style="left:7.5px;top:323.7px" width="12.50" height="13.30" viewBox="0 0 24 24" preserveAspectRatio="none"><path d="M1 3L7.5 21L14 3" stroke="#4a5260" stroke-width="2" fill="none"/><path d="M14.5 5H19" stroke="#555" stroke-width="1.6"/><circle cx="21" cy="4" r="1.6" fill="none" stroke="#555" stroke-width="1"/><rect x="14" y="14" width="10" height="10" rx="2" fill="#e0bc28" stroke="#fff" stroke-width="0.8"/><rect x="17" y="17" width="4" height="4" fill="#fff6c0"/></svg>
<svg class="a" style="left:7.5px;top:341px" width="12.50" height="13.50" viewBox="0 0 24 24" preserveAspectRatio="none"><path d="M1 23C3 14 9 4 22 1C21 10 15 19 6 20Z" fill="#4a80c4"/><path d="M1 23L15 8" stroke="#c8dcf0" stroke-width="0.8"/><rect x="14" y="14" width="10" height="10" rx="2" fill="#e0bc28" stroke="#fff" stroke-width="0.8"/><rect x="17" y="17" width="4" height="4" fill="#fff6c0"/></svg>
<svg class="a" style="left:8.5px;top:359.2px" width="12.00" height="12.30" viewBox="0 0 24 24" preserveAspectRatio="none"><rect x="1" y="5" width="18" height="12" rx="3" fill="#4a84c8"/><path d="M5 2V5M9 2V5M13 2V5M17 2V5M5 17V20M9 17V20M13 17V20" stroke="#4a84c8" stroke-width="1.5"/><rect x="14" y="14" width="10" height="10" rx="2" fill="#e0bc28" stroke="#fff" stroke-width="0.8"/><rect x="17" y="17" width="4" height="4" fill="#fff6c0"/></svg>
<svg class="a" style="left:8px;top:375.5px" width="12.50" height="13.00" viewBox="0 0 24 24" preserveAspectRatio="none"><rect x="1" y="1" width="19" height="19" fill="#3a6ca8"/><path d="M1 10.5H20M10.5 1V20" stroke="#a8c4e4" stroke-width="1.2"/><path d="M3 8L8 3M13 8L18 3" stroke="#fff" stroke-width="1"/><rect x="14" y="14" width="10" height="10" rx="2" fill="#e0bc28" stroke="#fff" stroke-width="0.8"/><rect x="17" y="17" width="4" height="4" fill="#fff6c0"/></svg>
<svg class="a" style="left:8px;top:392.4px" width="12.50" height="13.00" viewBox="0 0 24 24" preserveAspectRatio="none"><rect x="1" y="1" width="19" height="19" rx="1" fill="#b4cce8" stroke="#6a90c0" stroke-width="1"/><path d="M4 4L10 17L16 4" stroke="#3a5a88" stroke-width="1.6" fill="none"/><rect x="14" y="14" width="10" height="10" rx="2" fill="#e0bc28" stroke="#fff" stroke-width="0.8"/><rect x="17" y="17" width="4" height="4" fill="#fff6c0"/></svg>
<svg class="a" style="left:31.8px;top:99.5px" width="8.70" height="7.50" viewBox="0 0 24 24" preserveAspectRatio="none"><path d="M1 17C1 11 8 9 11 12C14 15 8 22 3 21C1.5 20 1 19 1 17Z" fill="#e8302a"/><path d="M4 12C6 9 10 9 12 11L8 16Z" fill="#4a8ad0"/><path d="M9 14L21 2L23.5 4L12 17Z" fill="#e8c838"/><path d="M7 12L13 8L16 13L11 18Z" fill="#f0d850"/></svg>
<svg class="a" style="left:45.5px;top:99px" width="8.00" height="8.50" viewBox="0 0 24 24" preserveAspectRatio="none"><path d="M2 23V10C2 6 8 6 8 10V23Z" fill="#c8c8c8"/><path d="M7 21V5C7 1 14 1 14 5V21Z" fill="#b4b4b4" stroke="#999" stroke-width="0.8"/><path d="M9 3C10 2 12 2 13 3" stroke="#4a7fbf" stroke-width="1.5"/><rect x="12" y="13" width="11" height="11" rx="1" fill="#4aa050"/><rect x="15.5" y="16" width="4" height="5" fill="#fff"/></svg>
<svg class="a" style="left:59px;top:100px" width="9.50" height="7.80" viewBox="0 0 24 24" preserveAspectRatio="none"><path d="M1 10C5 3 15 3 19 10C15 17 5 17 1 10Z" fill="#dce6f0" stroke="#c0c8d0" stroke-width="1"/><circle cx="10" cy="10" r="5" fill="#4a80c8"/><circle cx="9" cy="9" r="1.8" fill="#1a2a40"/><path d="M17 19H23L20 23Z" fill="#555"/></svg>
<svg class="a" style="left:72px;top:99.5px" width="9.50" height="8.00" viewBox="0 0 24 24" preserveAspectRatio="none"><path d="M1 1H23L15 11V22L10 19V11Z" fill="#4a84c4"/><path d="M1 1H23V5H1Z" fill="#d8c840"/><path d="M4 3H20" stroke="#7ab848" stroke-width="1.5"/><path d="M17 19H23L20 23Z" fill="#555"/></svg>
<svg class="a" style="left:85.8px;top:99.5px" width="8.20" height="8.00" viewBox="0 0 24 24" preserveAspectRatio="none"><path d="M13 3C9 0 3 2 4 6C4.5 8 6 9 8 9C5 9 2 11 3 14C4 17 9 18 12 15" stroke="#4a4e58" stroke-width="2.6" fill="none"/><rect x="13" y="13" width="10" height="10" fill="#e8e8e8" stroke="#888" stroke-width="1.4"/></svg>
<svg class="a" style="left:97px;top:102.5px" width="3.6" height="2" viewBox="0 0 4 2.2"><path d="M0 0H4L2 2.2Z" fill="#5a5a5a"/></svg>
<svg class="a" style="left:106px;top:99.5px" width="7.80" height="7.50" viewBox="0 0 24 24" preserveAspectRatio="none"><rect x="1" y="1" width="12" height="22" fill="#f4f4f4" stroke="#a8a8a8" stroke-width="1.2"/><circle cx="7" cy="8" r="2.5" fill="#f0a020"/><circle cx="7" cy="17" r="2.5" fill="#f0c020"/><path d="M17 1V17" stroke="#4a84c4" stroke-width="5"/><path d="M11 14L17 23L23 14Z" fill="#4a84c4"/></svg>
<svg class="a" style="left:119px;top:99.5px" width="7.80" height="7.50" viewBox="0 0 24 24" preserveAspectRatio="none"><rect x="1" y="1" width="12" height="22" fill="#f4f4f4" stroke="#a8a8a8" stroke-width="1.2"/><circle cx="7" cy="8" r="2.5" fill="#f0a020"/><circle cx="7" cy="17" r="2.5" fill="#f0c020"/><path d="M17 23V7" stroke="#4a84c4" stroke-width="5"/><path d="M11 10L17 1L23 10Z" fill="#4a84c4"/></svg>
<svg class="a" style="left:132px;top:99.5px" width="7.50" height="7.80" viewBox="0 0 24 24" preserveAspectRatio="none"><rect x="1" y="1" width="18" height="19" fill="#fafafa" stroke="#a0a0a0" stroke-width="1.6"/><circle cx="17.5" cy="18.5" r="5.5" fill="#f05050"/></svg>
<!-- status bar -->
<div class="a inp" style="left:2.5px;top:562.8px;width:138.5px;height:11.4px"></div>
<svg class="a" style="left:6.5px;top:564.8px" width="7" height="7" viewBox="0 0 7 7"><circle cx="2.8" cy="2.8" r="2.1" fill="none" stroke="#6a6a6a" stroke-width="0.8"/><path d="M4.3 4.3L6.5 6.5" stroke="#6a6a6a" stroke-width="0.9"/></svg>
<div class="st" style="left:17.2px;color:#8a8a8a">Escreva para localizar (Ctrl+K)</div>
<div class="st" style="left:145.3px;transform:scaleX(0.893)">Salvar projeto em: F:\gis_database\projetos\hexagonos.qgz</div>
<div class="st" style="left:594px">Coordenada</div>
<div class="a inp" style="left:627.7px;top:562.7px;width:51px;height:11.7px"></div>
<div class="st" style="left:631.5px">272198 9224939</div>
<svg class="a" style="left:681.3px;top:563.5px" width="8.2" height="9.3" viewBox="0 0 24 24"><ellipse cx="11" cy="14" rx="9" ry="8" fill="#555"/><path d="M4 10C8 12 12 8 17 12M5 17C9 15 13 19 16 16" stroke="#ddd" stroke-width="1.8" fill="none"/><circle cx="8" cy="5" r="4" fill="#666"/><path d="M15 2L22 8" stroke="#444" stroke-width="2.2"/></svg>
<div class="st" style="left:695.6px;transform:scaleX(0.8)">Escala</div>
<div class="a inp" style="left:714.4px;top:562.7px;width:43px;height:11.7px"></div>
<div class="st" style="left:717px">1:135337</div>
<div class="a" style="left:746.4px;top:563.3px;width:0.6px;height:10.5px;background:#dcdcdc"></div>
<svg class="a" style="left:749.5px;top:567.6px" width="3.6" height="2.2" viewBox="0 0 4 2.4"><path d="M0 0H4L2 2.4Z" fill="#505050"/></svg>
<svg class="a" style="left:763.6px;top:564.8px" width="7" height="7.5" viewBox="0 0 7 8"><path d="M1.7 3.8V2.6A1.8 1.8 0 0 1 5.3 2.6V3.8" stroke="#4a4a4a" stroke-width="1" fill="none"/><rect x="0.5" y="3.6" width="6" height="4.4" rx="0.6" fill="#4a4a4a"/></svg>
<div class="st" style="left:774.5px">Lupa</div>
<div class="a inp" style="left:789.4px;top:562.7px;width:43.6px;height:11.7px"></div>
<div class="st" style="left:792.3px">100%</div>
<svg class="a" style="left:825.8px;top:564.5px" width="4" height="8" viewBox="0 0 4 8"><path d="M0.3 3L2 1.2L3.7 3Z M0.3 5L2 6.8L3.7 5Z" fill="#3a3a3a"/></svg>
<div class="st" style="left:837.8px">Rotação</div>
<div class="a inp" style="left:864.4px;top:562.7px;width:44.5px;height:11.7px"></div>
<div class="a" style="left:901.9px;top:563.3px;width:0.6px;height:10.5px;background:#e0e0e0"></div>
<div class="st" style="left:867.3px">0,0 °</div>
<svg class="a" style="left:903.6px;top:564.5px" width="4" height="8" viewBox="0 0 4 8"><path d="M0.3 3L2 1.2L3.7 3Z M0.3 5L2 6.8L3.7 5Z" fill="#3a3a3a"/></svg>
<div class="cb" style="left:912.8px;top:564.6px"></div>
<svg class="a" style="left:913.3px;top:565px" width="6" height="6" viewBox="0 0 6 6"><path d="M0.9 3.1L2.3 4.9L5.2 1" stroke="#111" stroke-width="1.1" fill="none"/></svg>
<div class="st" style="left:922.2px">Renderizar</div>
<svg class="a" style="left:958.5px;top:564.6px" width="7.8" height="7.4" viewBox="0 0 24 24"><circle cx="12" cy="12" r="11" fill="#6a6a6a"/><path d="M1 12H23M12 1V23M4 5C9 9 15 9 20 5M4 19C9 15 15 15 20 19" stroke="#c8c8c8" stroke-width="1.8" fill="none"/></svg>
<div class="st" style="left:967.5px;transform:scaleX(0.83)">EPSG:31985</div>
<svg class="a" style="left:1011.8px;top:564.6px" width="8.6" height="8.2" viewBox="0 0 24 24"><path d="M1 10C1 3 23 3 23 10C23 17 15 17 12 17L16 23L8 17C4 16 1 14 1 10Z" fill="#4a4a4a"/><path d="M6 10H18" stroke="#bbb" stroke-width="2.5"/></svg>
</body></html>
